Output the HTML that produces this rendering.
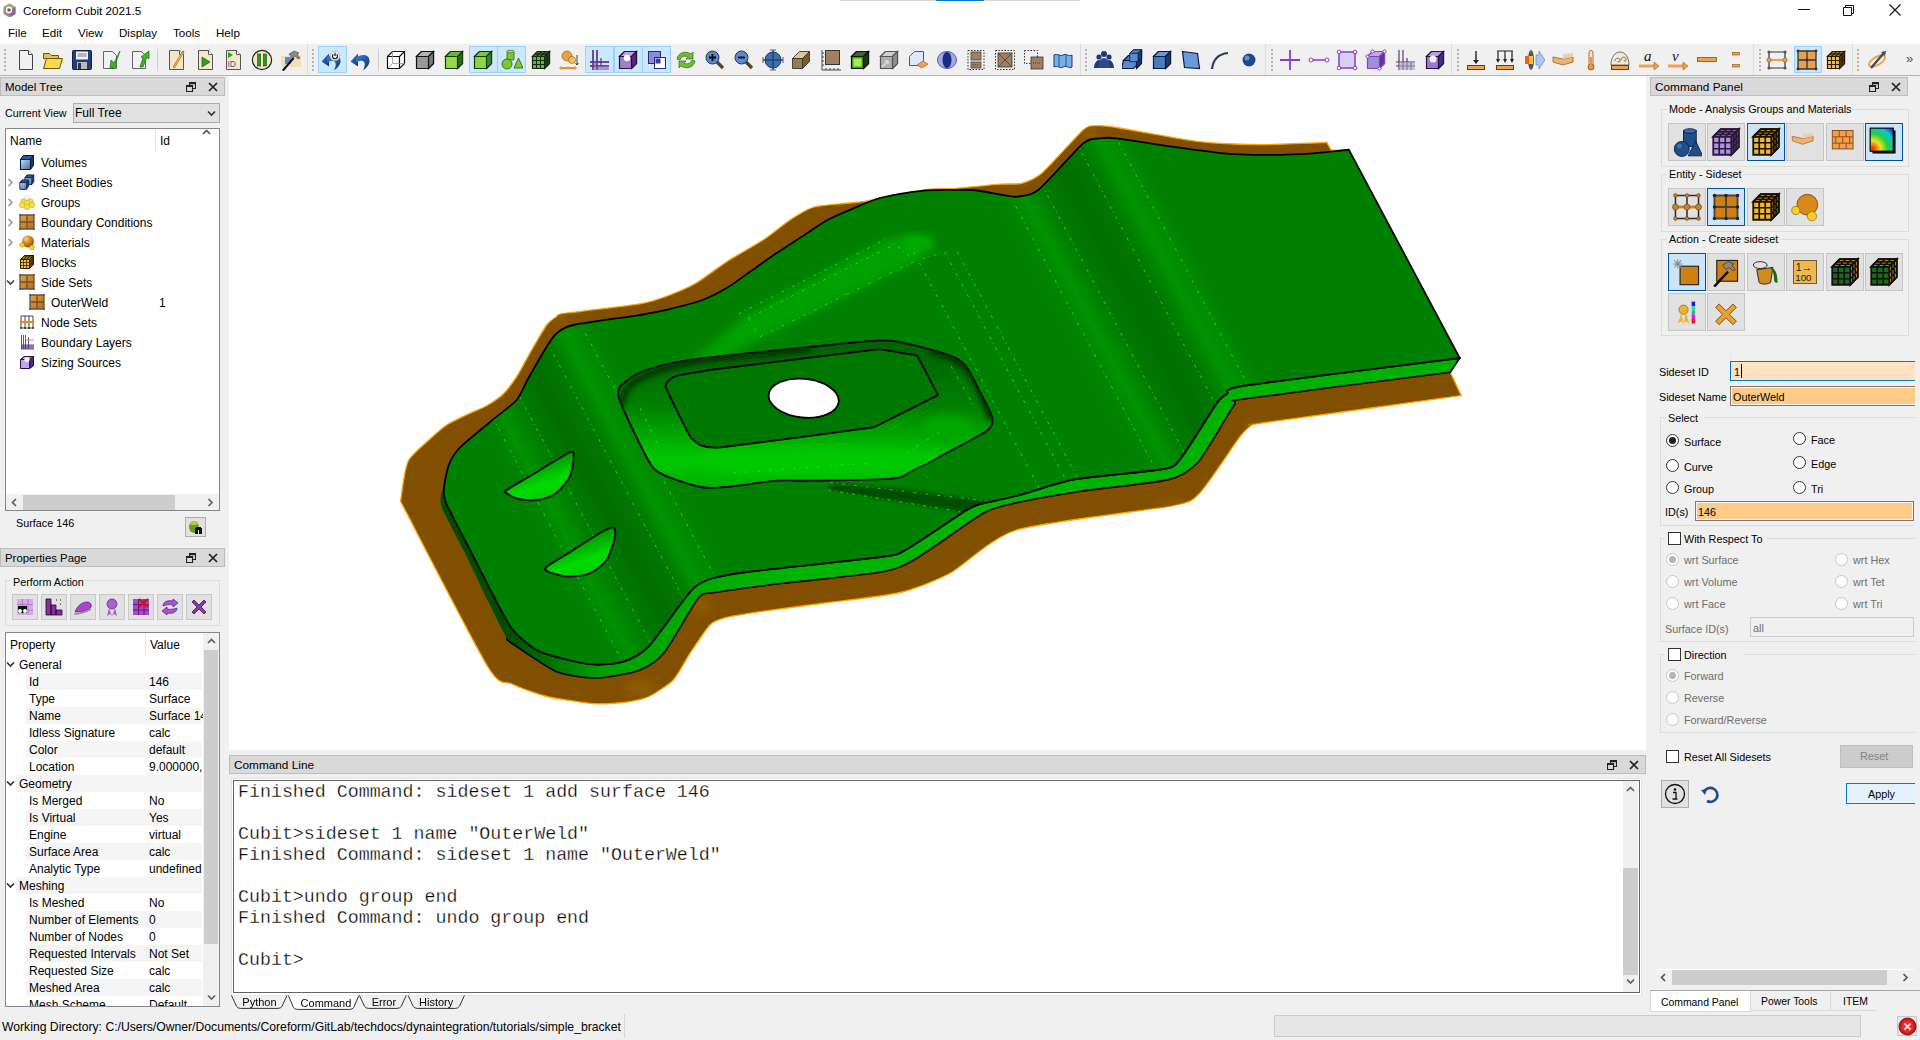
<!DOCTYPE html>
<html><head><meta charset="utf-8"><style>
*{margin:0;padding:0;box-sizing:border-box}
html,body{width:1920px;height:1040px;overflow:hidden;background:#f0f0f0;font-family:"Liberation Sans",sans-serif;font-size:12px;color:#000}
.a{position:absolute}
.t{position:absolute;white-space:nowrap;line-height:14px}
.hdr{position:absolute;background:#d9d9d9;border:1px solid #bcbcbc}
.grip{position:absolute;top:49px;width:2px;height:22px;background:repeating-linear-gradient(#b4b4b4 0 2px,transparent 2px 4px)}
.sep{position:absolute;top:49px;width:1px;height:22px;background:#cfcfcf}
.btn{position:absolute;background:#e1e1e1;border:1px solid #adadad}
.rad{position:absolute;width:13px;height:13px;border-radius:50%;border:1px solid #333;background:#fff}
.radd{position:absolute;width:13px;height:13px;border-radius:50%;border:1px solid #c4c4c4;background:#fff}
.chk{position:absolute;width:13px;height:13px;border:1px solid #333;background:#fff}
.gb{position:absolute;border:1px solid #dcdcdc}
.gl{position:absolute;background:#f0f0f0;padding:0 2px}
.dis{color:#6d6d6d}
.mono{position:absolute;white-space:pre;font-family:"Liberation Mono",monospace;font-size:18.3px;line-height:21px;color:#000;-webkit-text-stroke:0.3px #fff}

</style></head><body>
<div class="a" style="left:0px;top:0px;width:1920px;height:43px;background:#fff"></div>
<div class="a" style="left:840px;top:0px;width:240px;height:1px;background:#dadada"></div>
<div class="a" style="left:936px;top:0px;width:48px;height:1px;background:#0078d7"></div>
<svg class="a" style="left:3px;top:3px" width="13" height="14" viewBox="0 0 13 14"><path d="M6.5,0.5l6,3.5v7l-6,3.5l-6,-3.5v-7z" fill="#a08aa0"/><path d="M6.5,0.5l6,3.5l-6,3.5l-6,-3.5z" fill="#9ab070"/><path d="M12.5,4v7l-6,3.5v-7z" fill="#8a6aa0"/><circle cx="6" cy="7" r="3.2" fill="#fff"/><circle cx="6" cy="7" r="1.8" fill="#c04040"/></svg>
<div class="t" style="left:23px;top:4px;font-size:11.7px">Coreform Cubit 2021.5</div>
<div class="t" style="left:8px;top:26px;font-size:11.6px">File</div>
<div class="t" style="left:42px;top:26px;font-size:11.6px">Edit</div>
<div class="t" style="left:78px;top:26px;font-size:11.6px">View</div>
<div class="t" style="left:119px;top:26px;font-size:11.6px">Display</div>
<div class="t" style="left:173px;top:26px;font-size:11.6px">Tools</div>
<div class="t" style="left:216px;top:26px;font-size:11.6px">Help</div>
<svg class="a" style="left:1798px;top:9px" width="12" height="2" viewBox="0 0 12 2"><rect width="12" height="1" fill="#111"/></svg>
<svg class="a" style="left:1843px;top:5px" width="11" height="11" viewBox="0 0 11 11"><path d="M2.5,2.5v-2h8v8h-2M0.5,2.5h8v8h-8z" fill="none" stroke="#111"/></svg>
<svg class="a" style="left:1889px;top:4px" width="12" height="12" viewBox="0 0 12 12"><path d="M0.5,0.5l11,11M11.5,0.5l-11,11" stroke="#111" stroke-width="1.1"/></svg>
<div class="t" style="left:2px;top:1020px;font-size:12.2px">Working Directory: C:/Users/Owner/Documents/Coreform/GitLab/techdocs/dynaintegration/tutorials/simple_bracket</div>
<div class="a" style="left:624px;top:1014px;width:1px;height:24px;background:#d7d7d7"></div>
<div class="a" style="left:1274px;top:1015px;width:587px;height:22px;background:#e6e6e6;border:1px solid #cacaca"></div>
<div class="a" style="left:1897px;top:1016px;width:20px;height:20px;background:#e8e8e8;border:1px solid #c8c8c8"></div>
<svg class="a" style="left:1898px;top:1017px" width="19" height="19" viewBox="0 0 19 19"><circle cx="9.5" cy="9.5" r="8.5" fill="#d01818" stroke="#801010"/><circle cx="9.5" cy="9.5" r="6" fill="#e83030"/><path d="M6.5,6.5l6,6M12.5,6.5l-6,6" stroke="#fff" stroke-width="1.6"/></svg>
<div class="a" style="left:0;top:43px;width:1920px;height:33px;background:#f0f0f0;border-top:1px solid #fbfbfb;border-bottom:1px solid #b6b6b6"></div>
<div class="a" style="left:318px;top:46px;width:29px;height:27px;background:#cce8ff;border:1px solid #99d1ff"></div>
<div class="a" style="left:469px;top:46px;width:29px;height:27px;background:#cce8ff;border:1px solid #99d1ff"></div>
<div class="a" style="left:497px;top:46px;width:29px;height:27px;background:#cce8ff;border:1px solid #99d1ff"></div>
<div class="a" style="left:585px;top:46px;width:29px;height:27px;background:#cce8ff;border:1px solid #99d1ff"></div>
<div class="a" style="left:614px;top:46px;width:29px;height:27px;background:#cce8ff;border:1px solid #99d1ff"></div>
<div class="a" style="left:642px;top:46px;width:29px;height:27px;background:#cce8ff;border:1px solid #99d1ff"></div>
<div class="a" style="left:1794px;top:46px;width:28px;height:27px;background:#cce8ff;border:1px solid #99d1ff"></div>
<div class="grip" style="left:4px"></div>
<div class="grip" style="left:312px"></div>
<div class="grip" style="left:1085px"></div>
<div class="grip" style="left:1271px"></div>
<div class="grip" style="left:1457px"></div>
<div class="grip" style="left:1759px"></div>
<div class="grip" style="left:1857px"></div>
<div class="sep" style="left:157px"></div>
<div class="sep" style="left:378px"></div>
<div class="sep" style="left:1080px"></div>
<div class="sep" style="left:1265px"></div>
<div class="sep" style="left:1451px"></div>
<div class="sep" style="left:1753px"></div>
<div class="sep" style="left:1852px"></div>
<div class="a" style="left:307px;top:44px;width:1px;height:31px;background:#dcdcdc"></div>
<div class="a" style="left:1080px;top:44px;width:1px;height:31px;background:#dcdcdc"></div>
<div class="a" style="left:1265px;top:44px;width:1px;height:31px;background:#dcdcdc"></div>
<div class="a" style="left:1451px;top:44px;width:1px;height:31px;background:#dcdcdc"></div>
<div class="a" style="left:1753px;top:44px;width:1px;height:31px;background:#dcdcdc"></div>
<div class="a" style="left:1852px;top:44px;width:1px;height:31px;background:#dcdcdc"></div>
<svg class="a" style="left:15px;top:49px" width="22" height="22" viewBox="0 0 22 22"><path d="M4.5,1.5h9l4,4v15h-13z" fill="#eef0f2" stroke="#444"/><path d="M13.5,1.5v4h4" fill="#fff" stroke="#444"/></svg>
<svg class="a" style="left:42px;top:49px" width="22" height="22" viewBox="0 0 22 22"><path d="M1.5,4.5h6l2,2h7v3h-15z" fill="#e8c24a" stroke="#6a5200"/><path d="M1.5,19.5l3,-10h16l-3,10z" fill="#ffd84a" stroke="#6a5200"/></svg>
<svg class="a" style="left:71px;top:49px" width="22" height="22" viewBox="0 0 22 22"><rect x="1.5" y="1.5" width="19" height="19" rx="1" fill="#1d3f7a" stroke="#0b2250"/><rect x="5" y="2.5" width="12" height="8" fill="#f2f4f8"/><path d="M6.5,5h9M6.5,7h9" stroke="#556" stroke-width="0.8"/><rect x="6" y="13" width="10" height="7" fill="#bbb"/><rect x="7" y="14" width="3" height="6" fill="#333"/></svg>
<svg class="a" style="left:100px;top:49px" width="22" height="22" viewBox="0 0 22 22"><path d="M3.5,2.5h9l4,4v13h-13z" fill="#f2f2f2" stroke="#666"/><path d="M20,2l-6,12l-3,-3l-1,8l7,-1l-2,-2z" fill="#3cb820" stroke="#1a6a10" stroke-width="0.7"/></svg>
<svg class="a" style="left:129px;top:49px" width="22" height="22" viewBox="0 0 22 22"><path d="M3.5,2.5h9l4,4v13h-13z" fill="#f2f2f2" stroke="#666"/><path d="M11,18l3,-9l-2,-1l8,-6l0,8l-2,-2l-4,10z" fill="#3cb820" stroke="#1a6a10" stroke-width="0.7"/></svg>
<svg class="a" style="left:166px;top:49px" width="22" height="22" viewBox="0 0 22 22"><path d="M3.5,1.5h10l4,4v15h-14z" fill="#f8e6c8" stroke="#555"/><path d="M13.5,1.5v4h4" fill="#fff" stroke="#555"/><path d="M7,18l9,-15l1.5,1l-9,15z" fill="#f0c040" stroke="#8a6010" stroke-width="0.6"/><path d="M16,3l1,-1.5l1.5,1l-1,1.5z" fill="#e04020"/></svg>
<svg class="a" style="left:195px;top:49px" width="22" height="22" viewBox="0 0 22 22"><path d="M3.5,1.5h10l4,4v15h-14z" fill="#f8e6c8" stroke="#555"/><path d="M13.5,1.5v4h4" fill="#fff" stroke="#555"/><path d="M7,8v10l8,-5z" fill="#30a020" stroke="#146010" stroke-width="0.7"/></svg>
<svg class="a" style="left:223px;top:49px" width="22" height="22" viewBox="0 0 22 22"><path d="M3.5,1.5h10l4,4v15h-14z" fill="#f8e6c8" stroke="#555"/><path d="M13.5,1.5v4h4" fill="#fff" stroke="#555"/><path d="M5,3v6l5,-3z" fill="#30a020"/><text x="4.5" y="18" font-family="Liberation Sans" font-size="8.5" fill="#3a5a9a">ID</text></svg>
<svg class="a" style="left:251px;top:49px" width="22" height="22" viewBox="0 0 22 22"><circle cx="11" cy="11" r="9.6" fill="#f8e6c8" stroke="#222" stroke-width="1.2"/><rect x="6.5" y="5" width="3.2" height="12" fill="#2a9a18" stroke="#145010" stroke-width="0.6"/><rect x="12.3" y="5" width="3.2" height="12" fill="#2a9a18" stroke="#145010" stroke-width="0.6"/></svg>
<svg class="a" style="left:280px;top:49px" width="22" height="22" viewBox="0 0 22 22"><rect x="1" y="7" width="20" height="11" fill="#efe0b8"/><rect x="5" y="8" width="6" height="7" fill="#5a8ad0"/><path d="M2,21l11,-13l1.5,1.5l-11,13z" fill="#111"/><path d="M9,5l5,-3l5,2l-2,1l3,4l-2,1l-3,-3l-3,2z" fill="#8a8a8a" stroke="#444" stroke-width="0.6"/></svg>
<svg class="a" style="left:321px;top:49px" width="22" height="22" viewBox="0 0 22 22"><defs><linearGradient id="gundo" x1="0" y1="0" x2="1" y2="1"><stop offset="0" stop-color="#3a80d8"/><stop offset="1" stop-color="#0a3078"/></linearGradient></defs><path d="M0.5,12.5L8,4.5V17.5Z" fill="url(#gundo)"/><path d="M6,8.5C11,5 19,4.5 19.5,11.5C19.8,15 17,18.5 13,21.5C15,17.5 15.5,14 13.5,12.5C11.5,11 9,11.5 6,14Z" fill="url(#gundo)"/><circle cx="14" cy="7" r="4.8" fill="#f4f4f4" stroke="#999" stroke-width="0.6"/><path d="M12.3,5.4a2.5,2.5 0 1 0 3.4,0M14,3.8v3.2" stroke="#111" stroke-width="1.2" fill="none"/></svg>
<svg class="a" style="left:350px;top:49px" width="22" height="22" viewBox="0 0 22 22"><defs><linearGradient id="gundo" x1="0" y1="0" x2="1" y2="1"><stop offset="0" stop-color="#3a80d8"/><stop offset="1" stop-color="#0a3078"/></linearGradient></defs><path d="M0.5,12.5L8,4.5V17.5Z" fill="url(#gundo)"/><path d="M6,8.5C11,5 19,4.5 19.5,11.5C19.8,15 17,18.5 13,21.5C15,17.5 15.5,14 13.5,12.5C11.5,11 9,11.5 6,14Z" fill="url(#gundo)"/></svg>
<svg class="a" style="left:385px;top:49px" width="22" height="22" viewBox="0 0 22 22"><path d="M2.5,7.5l5,-5h12v12l-5,5h-12zM2.5,7.5h12v12M14.5,7.5l5,-5" fill="#fff" stroke="#111" stroke-width="1.2"/><path d="M7.5,2.5v12h12M7.5,14.5l-5,5" fill="none" stroke="#999" stroke-width="0.8"/></svg>
<svg class="a" style="left:414px;top:49px" width="22" height="22" viewBox="0 0 22 22"><path d="M2.5,7.5l5,-5h12v12l-5,5h-12z" fill="#9a9a9a" stroke="#111" stroke-width="1.2"/><path d="M2.5,7.5l5,-5h12l-5,5z" fill="#b4b4b4" stroke="#111" stroke-width="1.2"/><path d="M14.5,7.5l5,-5v12l-5,5z" fill="#7a7a7a" stroke="#111" stroke-width="1.2"/></svg>
<svg class="a" style="left:443px;top:49px" width="22" height="22" viewBox="0 0 22 22"><path d="M2.5,7.5l5,-5h12v12l-5,5h-12z" fill="#9ad84a" stroke="#123a10" stroke-width="1.2"/><path d="M14.5,7.5l5,-5v12l-5,5z" fill="#2a6a20" stroke="#123a10" stroke-width="1.2"/><path d="M2.5,7.5l5,-5h12l-5,5z" fill="#6aba30" stroke="#123a10" stroke-width="1.2"/></svg>
<svg class="a" style="left:472px;top:49px" width="22" height="22" viewBox="0 0 22 22"><path d="M2.5,7.5l5,-5h12v12l-5,5h-12z" fill="#8ad83a" stroke="#143a10" stroke-width="1.2"/><path d="M2.5,7.5l5,-5h12l-5,5z" fill="#7ac832" stroke="#143a10" stroke-width="1.2"/><path d="M14.5,7.5l5,-5v12l-5,5z" fill="#3a8a20" stroke="#143a10" stroke-width="1.2"/></svg>
<svg class="a" style="left:501px;top:49px" width="22" height="22" viewBox="0 0 22 22"><rect x="6" y="2" width="7" height="9" rx="1" fill="#7ac832" stroke="#245a14" stroke-width="0.8"/><ellipse cx="9.5" cy="2.5" rx="3.5" ry="1.3" fill="#aee860" stroke="#245a14" stroke-width="0.6"/><circle cx="6" cy="15" r="5" fill="#7ac832" stroke="#245a14" stroke-width="0.8"/><path d="M13,19l4.5,-10l4.5,10z" fill="#7ac832" stroke="#245a14" stroke-width="0.8"/></svg>
<svg class="a" style="left:530px;top:49px" width="22" height="22" viewBox="0 0 22 22"><path d="M2.5,7.5l5,-5h12v12l-5,5h-12z" fill="#6ab83a" stroke="#112a10" stroke-width="1.2"/><path d="M2.5,7.5l5,-5h12l-5,5z" fill="#5aa830" stroke="#112a10" stroke-width="1.2"/><path d="M14.5,7.5l5,-5v12l-5,5z" fill="#2a6a20" stroke="#112a10" stroke-width="1.2"/><path d="M2.5,11.5h12M2.5,15.5h12M6.5,7.5v12M10.5,7.5v12M6.5,7.5l5,-5M10.5,7.5l5,-5M4.2,5.8h12M5.8,4.2h12M16.2,5.8v12M17.8,4.2v12M14.5,11.5l5,-5M14.5,15.5l5,-5" stroke="#112a10" stroke-width="1.1" fill="none"/></svg>
<svg class="a" style="left:558px;top:49px" width="22" height="22" viewBox="0 0 22 22"><circle cx="9" cy="7" r="5" fill="#f0a040" stroke="#8a5010" stroke-width="0.6"/><circle cx="14" cy="11" r="3.5" fill="#f8c060" stroke="#8a5010" stroke-width="0.6"/><path d="M2,19h16" stroke="#c07020" stroke-width="1.5"/><circle cx="3" cy="19" r="1.6" fill="#f09030"/><circle cx="10" cy="19" r="1.6" fill="#f09030"/><circle cx="17" cy="19" r="1.6" fill="#f09030"/><path d="M19,6v10l-1.5,-2M19,16l1.5,-2" stroke="#333" fill="none" stroke-width="0.9"/></svg>
<svg class="a" style="left:588px;top:49px" width="22" height="22" viewBox="0 0 22 22"><path d="M5,1v20M9,1v20M2,17h19M2,13h19M13,9v12" stroke="#6a3a8a" stroke-width="1.3" fill="none"/><rect x="5" y="13" width="4" height="8" fill="#b090d0"/><rect x="9" y="17" width="12" height="4" fill="#b090d0"/><path d="M5,1v20M9,1v20M2,17h19M2,13h19" stroke="#5a2a7a" stroke-width="1.1" fill="none"/></svg>
<svg class="a" style="left:617px;top:49px" width="22" height="22" viewBox="0 0 22 22"><path d="M2.5,7.5l5,-5h12v12l-5,5h-12z" fill="#a080c8" stroke="#2a1040" stroke-width="1.2"/><path d="M2.5,7.5l5,-5h12l-5,5z" fill="#c0a0e0" stroke="#2a1040" stroke-width="1.2"/><path d="M14.5,7.5l5,-5v12l-5,5z" fill="#502a80" stroke="#2a1040" stroke-width="1.2"/><circle cx="10" cy="9" r="3.2" fill="#fff"/></svg>
<svg class="a" style="left:646px;top:49px" width="22" height="22" viewBox="0 0 22 22"><rect x="2.5" y="2.5" width="12" height="12" fill="#8a8ae0" stroke="#2a2a6a"/><rect x="8.5" y="8.5" width="11" height="11" fill="#fff" stroke="#2a2a6a"/><rect x="9.5" y="9.5" width="5" height="5" fill="#3a3a9a"/></svg>
<svg class="a" style="left:675px;top:49px" width="22" height="22" viewBox="0 0 22 22"><path d="M2,10c1,-6 8,-9 14,-5l2,-2v7h-7l2,-2c-4,-2 -7,0 -8,3z" fill="#6ac030" stroke="#245a10" stroke-width="0.6"/><path d="M20,12c-1,6 -8,9 -14,5l-2,2v-7h7l-2,2c4,2 7,0 8,-3z" fill="#6ac030" stroke="#245a10" stroke-width="0.6"/></svg>
<svg class="a" style="left:704px;top:49px" width="22" height="22" viewBox="0 0 22 22"><path d="M12,12l7,7" stroke="#5a4020" stroke-width="3.2"/><circle cx="8.5" cy="8.5" r="6.5" fill="#5a8ac8" stroke="#1a3a6a" stroke-width="1"/><path d="M5,8.5h7M8.5,5v7" stroke="#000" stroke-width="1.8"/></svg>
<svg class="a" style="left:733px;top:49px" width="22" height="22" viewBox="0 0 22 22"><path d="M12,12l7,7" stroke="#5a4020" stroke-width="3.2"/><circle cx="8.5" cy="8.5" r="6.5" fill="#5a8ac8" stroke="#1a3a6a" stroke-width="1"/><path d="M5,8.5h7" stroke="#000" stroke-width="1.8"/></svg>
<svg class="a" style="left:762px;top:49px" width="22" height="22" viewBox="0 0 22 22"><circle cx="11" cy="11" r="8" fill="#3a70b0" stroke="#1a3a6a"/><path d="M11,1v20M1,11h20" stroke="#1a2a4a" stroke-width="1"/><path d="M8,1h6M8,21h6M1,8v6M21,8v6" stroke="#333" stroke-width="0.8"/></svg>
<svg class="a" style="left:790px;top:49px" width="22" height="22" viewBox="0 0 22 22"><path d="M2.5,9.5l7,-7h10l-7,7z" fill="#e0c890" stroke="#333" stroke-width="0.9"/><path d="M2.5,9.5h10v10h-10z" fill="#9a7a50" stroke="#333" stroke-width="0.9"/><path d="M12.5,9.5l7,-7v10l-7,7z" fill="#7a5a30" stroke="#333" stroke-width="0.9"/></svg>
<svg class="a" style="left:820px;top:49px" width="22" height="22" viewBox="0 0 22 22"><rect x="5.5" y="1.5" width="14" height="14" fill="#a08060" stroke="#333"/><path d="M2,1v20h19M2,4h2M2,8h2M2,12h2M2,16h2M6,19v2M10,19v2M14,19v2M18,19v2" stroke="#333" fill="none" stroke-width="0.9"/></svg>
<svg class="a" style="left:849px;top:49px" width="22" height="22" viewBox="0 0 22 22"><path d="M2.5,7.5l5,-5h12v12l-5,5h-12z" fill="#4a9a30" stroke="#111" stroke-width="1.2"/><path d="M2.5,7.5l5,-5h12l-5,5z" fill="#3a6a30" stroke="#111" stroke-width="1.2"/><path d="M14.5,7.5l5,-5v12l-5,5z" fill="#1a3a18" stroke="#111" stroke-width="1.2"/><rect x="4.5" y="9.5" width="8" height="8" fill="#a8f040"/></svg>
<svg class="a" style="left:878px;top:49px" width="22" height="22" viewBox="0 0 22 22"><path d="M2.5,7.5l5,-5h12v12l-5,5h-12z" fill="#b0b0b0" stroke="#555" stroke-width="1.2"/><path d="M2.5,7.5l5,-5h12l-5,5z" fill="#d0d0d0" stroke="#555" stroke-width="1.2"/><path d="M14.5,7.5l5,-5v12l-5,5z" fill="#909090" stroke="#555" stroke-width="1.2"/><path d="M4,18l6,-6M10,12h-3M10,12v3" stroke="#ddd" stroke-width="1.5" fill="none"/></svg>
<svg class="a" style="left:907px;top:49px" width="22" height="22" viewBox="0 0 22 22"><path d="M2.5,7.5l5,-5h9v9l-5,5h-9z" fill="#dde8f8" stroke="#3a5a9a"/><path d="M10,16l6,-4l5,3l-6,4z" fill="#f0a050" stroke="#9a5010" stroke-width="0.6"/></svg>
<svg class="a" style="left:936px;top:49px" width="22" height="22" viewBox="0 0 22 22"><ellipse cx="11" cy="11" rx="9.5" ry="8.5" fill="#a8a8e0" stroke="#5a5aa0"/><ellipse cx="11" cy="11" rx="4.5" ry="8" fill="#1a2a8a"/></svg>
<svg class="a" style="left:965px;top:49px" width="22" height="22" viewBox="0 0 22 22"><rect x="3" y="1.5" width="16" height="19" fill="none" stroke="#333" stroke-dasharray="1.5 1.5"/><rect x="6" y="3" width="10" height="8" fill="#a08060" stroke="#333" stroke-width="0.7"/><rect x="6" y="13" width="10" height="6" fill="#a08060" stroke="#333" stroke-width="0.7"/><path d="M8,16h6" stroke="#333" stroke-dasharray="1 1"/></svg>
<svg class="a" style="left:994px;top:49px" width="22" height="22" viewBox="0 0 22 22"><rect x="1.5" y="1.5" width="19" height="19" fill="none" stroke="#333" stroke-dasharray="1.5 1.5"/><rect x="4" y="4" width="14" height="14" fill="#a08060" stroke="#333" stroke-width="0.8"/><path d="M4,4l14,14M18,4l-14,14" stroke="#333" stroke-width="0.7"/></svg>
<svg class="a" style="left:1023px;top:49px" width="22" height="22" viewBox="0 0 22 22"><rect x="1.5" y="1.5" width="13" height="13" fill="none" stroke="#333" stroke-dasharray="1.5 1.5"/><rect x="8" y="8" width="12" height="12" fill="#a08060" stroke="#333" stroke-width="0.8"/><path d="M10,14h7" stroke="#333" stroke-dasharray="1 1"/></svg>
<svg class="a" style="left:1052px;top:49px" width="22" height="22" viewBox="0 0 22 22"><path d="M2,6c3,-2 6,2 9,0c3,-2 6,2 9,0v12c-3,2 -6,-2 -9,0c-3,2 -6,-2 -9,0z" fill="#7ab0e8" stroke="#1a3a7a"/><path d="M7,5v13M14,5v13" stroke="#1a3a7a" stroke-width="0.8"/></svg>
<svg class="a" style="left:1093px;top:49px" width="22" height="22" viewBox="0 0 22 22"><circle cx="6" cy="8" r="2.6" fill="#1a3a7a"/><circle cx="16" cy="8" r="2.6" fill="#1a3a7a"/><circle cx="11" cy="5" r="3" fill="#1a3a7a"/><path d="M1,19c0,-5 3,-8 5,-8c2,0 5,3 5,8zM11,19c0,-5 3,-8 5,-8c2,0 5,3 5,8z" fill="#1a3a7a"/><path d="M5,19c0,-6 3,-10 6,-10c3,0 6,4 6,10z" fill="#2a4a8a"/></svg>
<svg class="a" style="left:1122px;top:49px" width="22" height="22" viewBox="0 0 22 22"><path d="M1.5,11.5l5,-5h10v8l-5,5h-12z" fill="#5a8ad0" stroke="#0a1a40" stroke-width="1.2"/><path d="M1.5,11.5l5,-5h12l-5,5z" fill="#4a7ac0" stroke="#0a1a40" stroke-width="1.2"/><path d="M14.5,7.5l5,-5v12l-5,5z" fill="#1a3a70" stroke="#0a1a40" stroke-width="1.2"/><g transform="translate(6,-1) scale(0.7)"><path d="M2.5,7.5l5,-5h12v12l-5,5h-12z" fill="#5a8ad0" stroke="#0a1a40" stroke-width="1.2"/><path d="M2.5,7.5l5,-5h12l-5,5z" fill="#4a7ac0" stroke="#0a1a40" stroke-width="1.2"/><path d="M14.5,7.5l5,-5v12l-5,5z" fill="#1a3a70" stroke="#0a1a40" stroke-width="1.2"/></g></svg>
<svg class="a" style="left:1151px;top:49px" width="22" height="22" viewBox="0 0 22 22"><path d="M2.5,7.5l5,-5h12v12l-5,5h-12z" fill="#4a7ac0" stroke="#0a1a40" stroke-width="1.2"/><path d="M2.5,7.5l5,-5h12l-5,5z" fill="#6a9ad8" stroke="#0a1a40" stroke-width="1.2"/><path d="M14.5,7.5l5,-5v12l-5,5z" fill="#1a3a70" stroke="#0a1a40" stroke-width="1.2"/></svg>
<svg class="a" style="left:1180px;top:49px" width="22" height="22" viewBox="0 0 22 22"><path d="M2.5,2.5l15,2l2,15l-15,-1z" fill="#6a9ad8" stroke="#0a1a40" stroke-width="1.2"/></svg>
<svg class="a" style="left:1209px;top:49px" width="22" height="22" viewBox="0 0 22 22"><path d="M3,20c1,-9 6,-15 16,-16" stroke="#2a3a5a" stroke-width="2.2" fill="none"/></svg>
<svg class="a" style="left:1238px;top:49px" width="22" height="22" viewBox="0 0 22 22"><circle cx="11" cy="11" r="6.5" fill="#1a4a8a"/><circle cx="9" cy="9" r="2.5" fill="#8ab0e0" opacity="0.7"/></svg>
<svg class="a" style="left:1279px;top:49px" width="22" height="22" viewBox="0 0 22 22"><path d="M11,1v20M1,11h20" stroke="#8a3ad0" stroke-width="1.8"/></svg>
<svg class="a" style="left:1308px;top:49px" width="22" height="22" viewBox="0 0 22 22"><path d="M3,11h16" stroke="#8a3ad0" stroke-width="1.5"/><circle cx="3" cy="11" r="2" fill="#fff" stroke="#8a3ad0"/><circle cx="19" cy="11" r="2" fill="#fff" stroke="#8a3ad0"/></svg>
<svg class="a" style="left:1336px;top:49px" width="22" height="22" viewBox="0 0 22 22"><rect x="3" y="3" width="16" height="16" fill="#d8d0f0" stroke="#8a3ad0" stroke-width="1.5"/><circle cx="3" cy="3" r="1.8" fill="#fff" stroke="#8a3ad0"/><circle cx="19" cy="3" r="1.8" fill="#fff" stroke="#8a3ad0"/><circle cx="3" cy="19" r="1.8" fill="#fff" stroke="#8a3ad0"/><circle cx="19" cy="19" r="1.8" fill="#fff" stroke="#8a3ad0"/></svg>
<svg class="a" style="left:1365px;top:49px" width="22" height="22" viewBox="0 0 22 22"><path d="M2.5,7.5l5,-5h12v12l-5,5h-12z" fill="#a090d0" stroke="#8a3ad0" stroke-width="1.2"/><path d="M2.5,7.5l5,-5h12l-5,5z" fill="#c0b0e0" stroke="#8a3ad0" stroke-width="1.2"/><path d="M14.5,7.5l5,-5v12l-5,5z" fill="#5a3a8a" stroke="#8a3ad0" stroke-width="1.2"/><circle cx="2.5" cy="7.5" r="1.6" fill="#fff" stroke="#8a3ad0"/><circle cx="19.5" cy="2.5" r="1.6" fill="#fff" stroke="#8a3ad0"/><circle cx="14.5" cy="19.5" r="1.6" fill="#fff" stroke="#8a3ad0"/><circle cx="7.5" cy="2.5" r="1.6" fill="#fff" stroke="#8a3ad0"/></svg>
<svg class="a" style="left:1394px;top:49px" width="22" height="22" viewBox="0 0 22 22"><path d="M5,1v20M9,1v20M2,17h19M2,13h19M13,9v12M17,13v8" stroke="#5a3a6a" stroke-width="1.2" fill="none"/><rect x="5" y="13" width="16" height="8" fill="#b0a0c8" opacity="0.6"/></svg>
<svg class="a" style="left:1424px;top:49px" width="22" height="22" viewBox="0 0 22 22"><path d="M2.5,7.5l5,-5h12v12l-5,5h-12z" fill="#9a7ad0" stroke="#2a1050" stroke-width="1.2"/><path d="M2.5,7.5l5,-5h12l-5,5z" fill="#b8a0e0" stroke="#2a1050" stroke-width="1.2"/><path d="M14.5,7.5l5,-5v12l-5,5z" fill="#4a2a80" stroke="#2a1050" stroke-width="1.2"/><circle cx="9" cy="10" r="3.5" fill="#f4f4f4"/></svg>
<svg class="a" style="left:1465px;top:49px" width="22" height="22" viewBox="0 0 22 22"><path d="M11,2v12" stroke="#222" stroke-width="1.4"/><path d="M8,11l3,4l3,-4z" fill="#222"/><rect x="2.5" y="16.5" width="17" height="4" fill="#f0a050" stroke="#6a3a10"/></svg>
<svg class="a" style="left:1494px;top:49px" width="22" height="22" viewBox="0 0 22 22"><path d="M3,2h16M4,2v10M11,2v10M18,2v10" stroke="#222" stroke-width="1.2" fill="none"/><path d="M2,10l2,4l2,-4zM9,10l2,4l2,-4zM16,10l2,4l2,-4z" fill="#222"/><rect x="2.5" y="16.5" width="17" height="4" fill="#f0a050" stroke="#6a3a10"/></svg>
<svg class="a" style="left:1523px;top:49px" width="22" height="22" viewBox="0 0 22 22"><path d="M13,6h3v-4l6,9l-6,9v-4h-3z" fill="#a8c8f8" stroke="#5a7ab0" stroke-width="0.6"/><ellipse cx="8" cy="11" rx="3" ry="10" fill="#555"/><rect x="2" y="7" width="8" height="8" fill="#f06010"/><rect x="6" y="7" width="4" height="8" fill="#f8c040"/></svg>
<svg class="a" style="left:1552px;top:49px" width="22" height="22" viewBox="0 0 22 22"><path d="M1,8l10,2l10,-2v5l-10,3l-10,-3z" fill="#f0b070" stroke="#8a5010" stroke-width="0.7"/><path d="M11,5l10,-1v4l-10,2z" fill="#e8d0b8"/></svg>
<svg class="a" style="left:1580px;top:49px" width="22" height="22" viewBox="0 0 22 22"><rect x="9" y="1.5" width="4" height="15" rx="2" fill="#f8e8d0" stroke="#8a5010" stroke-width="0.8"/><circle cx="11" cy="18" r="3" fill="#f09040" stroke="#8a5010" stroke-width="0.8"/><path d="M11,8v9" stroke="#f09040" stroke-width="2"/></svg>
<svg class="a" style="left:1609px;top:49px" width="22" height="22" viewBox="0 0 22 22"><path d="M2,16c0,-8 4,-13 9,-13c5,0 9,5 9,13z" fill="#f4e8d8" stroke="#554" stroke-width="0.8"/><path d="M6,12c0,-3 4,-4 5,-1c1,2 -2,3 -2,1M12,11c0,-3 4,-4 5,-1c1,2 -2,3 -2,1" stroke="#554" stroke-width="0.8" fill="none"/><rect x="2.5" y="16.5" width="17" height="4" fill="#f0a050" stroke="#6a3a10"/></svg>
<svg class="a" style="left:1638px;top:49px" width="22" height="22" viewBox="0 0 22 22"><text x="6" y="12" font-family="Liberation Serif" font-style="italic" font-size="15" fill="#111">a</text><path d="M1,17h16" stroke="#f0a050" stroke-width="3"/><path d="M16,13l5,4l-5,4z" fill="#f0a050" stroke="#8a5010" stroke-width="0.5"/></svg>
<svg class="a" style="left:1667px;top:49px" width="22" height="22" viewBox="0 0 22 22"><text x="5" y="12" font-family="Liberation Serif" font-style="italic" font-size="15" fill="#111">v</text><path d="M1,17h16" stroke="#f0a050" stroke-width="3"/><path d="M16,13l5,4l-5,4z" fill="#f0a050" stroke="#8a5010" stroke-width="0.5"/></svg>
<svg class="a" style="left:1696px;top:49px" width="22" height="22" viewBox="0 0 22 22"><rect x="1.5" y="8.5" width="19" height="4" fill="#f0a050" stroke="#8a5010" stroke-width="0.8"/></svg>
<svg class="a" style="left:1725px;top:49px" width="22" height="22" viewBox="0 0 22 22"><rect x="7.5" y="3.5" width="7" height="2.5" fill="#f0a050" stroke="#8a5010" stroke-width="0.6"/><rect x="7.5" y="15.5" width="7" height="2.5" fill="#f0a050" stroke="#8a5010" stroke-width="0.6"/></svg>
<svg class="a" style="left:1766px;top:49px" width="22" height="22" viewBox="0 0 22 22"><path d="M3,3h16v16h-16zM3,11h16" stroke="#333" stroke-width="1.2" fill="none"/><path d="M3,11h16" stroke="#f0a050" stroke-width="2"/><circle cx="3" cy="3" r="1.6" fill="#555"/><circle cx="19" cy="3" r="1.6" fill="#555"/><circle cx="3" cy="19" r="1.6" fill="#555"/><circle cx="19" cy="19" r="1.6" fill="#555"/><circle cx="3" cy="11" r="2.2" fill="#f0a050" stroke="#8a5010" stroke-width="0.6"/><circle cx="19" cy="11" r="2.2" fill="#f0a050" stroke="#8a5010" stroke-width="0.6"/></svg>
<svg class="a" style="left:1796px;top:49px" width="22" height="22" viewBox="0 0 22 22"><rect x="2" y="2" width="18" height="18" fill="#e8a050"/><path d="M2,2h18v18h-18zM11,2v18M2,11h18" stroke="#333" stroke-width="1.3" fill="none"/><circle cx="2" cy="2" r="1.4" fill="#333"/><circle cx="20" cy="2" r="1.4" fill="#333"/><circle cx="2" cy="20" r="1.4" fill="#333"/><circle cx="20" cy="20" r="1.4" fill="#333"/><circle cx="11" cy="11" r="1.4" fill="#333"/></svg>
<svg class="a" style="left:1825px;top:49px" width="22" height="22" viewBox="0 0 22 22"><path d="M2.5,7.5l5,-5h12v12l-5,5h-12z" fill="#f0c040" stroke="#2a1a00" stroke-width="1.2"/><path d="M2.5,7.5l5,-5h12l-5,5z" fill="#e8b030" stroke="#2a1a00" stroke-width="1.2"/><path d="M14.5,7.5l5,-5v12l-5,5z" fill="#8a6010" stroke="#2a1a00" stroke-width="1.2"/><path d="M2.5,11.5h12M2.5,15.5h12M6.5,7.5v12M10.5,7.5v12M6.5,7.5l5,-5M10.5,7.5l5,-5M4.2,5.8h12M5.8,4.2h12M16.2,5.8v12M17.8,4.2v12M14.5,11.5l5,-5M14.5,15.5l5,-5" stroke="#2a1a00" stroke-width="1.1" fill="none"/></svg>
<svg class="a" style="left:1866px;top:49px" width="22" height="22" viewBox="0 0 22 22"><ellipse cx="11" cy="12" rx="9" ry="4" fill="none" stroke="#f0a050" stroke-width="2" transform="rotate(-30 11 12)"/><path d="M5,19l12,-14" stroke="#444" stroke-width="2.2"/><path d="M15,3l5,-1l-1,5z" fill="#444"/></svg>
<div class="t" style="left:1906px;top:52px;font-size:13px;color:#555">&#187;</div>
<div class="a" style="left:229px;top:76px;width:1417px;height:674px;background:#fff"></div>
<svg class="a" style="left:0;top:0" width="1920" height="1040" viewBox="0 0 1920 1040">
<defs>
<clipPath id="ctop"><path d="M448.8,465.0 C450.6,460.0 454.9,452.8 460.0,447.5 C465.1,442.2 485.9,425.5 492.5,420.0 C499.1,414.5 512.5,404.9 516.7,400.0 C520.9,395.1 524.8,384.5 528.3,378.3 C531.8,372.1 543.4,351.9 546.7,346.7 C550.0,341.4 553.6,335.8 556.7,333.3 C559.8,330.8 563.6,327.1 573.3,325.0 C583.0,322.9 628.9,316.8 640.0,315.0 C651.1,313.2 661.5,311.1 668.8,309.4 C676.0,307.6 695.6,302.6 702.5,300.0 C709.4,297.4 721.7,291.0 727.5,287.5 C733.3,284.0 746.7,274.1 752.5,270.0 C758.3,265.9 771.7,256.4 777.5,252.5 C783.3,248.6 796.7,240.0 802.5,236.2 C808.3,232.5 821.7,223.2 827.5,220.0 C833.3,216.8 846.4,211.3 852.5,208.8 C858.6,206.2 871.9,200.1 880.0,198.0 C888.1,195.9 911.0,191.7 921.7,190.8 C932.4,189.9 962.6,189.6 971.7,190.0 C980.8,190.4 994.8,193.7 1000.0,194.5 C1005.2,195.3 1012.2,197.2 1016.7,196.7 C1021.2,196.2 1030.5,196.2 1038.3,190.0 C1046.1,183.8 1076.1,149.3 1083.3,143.3 C1090.5,137.3 1096.1,138.9 1100.0,138.3 C1103.9,137.7 1108.9,137.4 1116.7,138.3 C1124.5,139.2 1153.1,143.9 1166.7,145.8 C1180.3,147.7 1217.5,153.2 1233.3,154.2 C1249.1,155.2 1288.5,154.6 1302.0,154.1 C1315.5,153.6 1348.8,149.7 1348.8,149.7 C1348.8,149.7 1459.7,358.1 1459.7,358.1 C1459.7,358.1 1272.8,381.3 1245.6,385.5 C1218.4,389.7 1230.2,392.0 1226.9,394.0 C1223.6,396.0 1222.4,395.5 1217.0,403.0 C1211.6,410.5 1186.9,451.0 1180.6,458.7 C1174.3,466.4 1175.2,466.7 1162.7,469.1 C1150.2,471.5 1089.9,476.6 1073.3,479.6 C1056.7,482.6 1030.5,492.2 1020.0,495.0 C1009.5,497.8 989.5,501.6 983.3,503.3 C977.1,505.1 975.5,504.8 966.7,510.0 C958.0,515.2 918.0,542.9 908.3,548.3 C898.6,553.7 901.8,554.0 883.3,556.7 C864.8,559.4 770.0,569.2 750.0,571.7 C730.0,574.2 718.4,576.7 712.0,578.5 C705.6,580.3 698.4,584.4 695.0,587.0 C691.6,589.6 688.4,594.0 683.0,601.0 C677.6,608.0 655.3,639.6 648.3,646.7 C641.3,653.8 630.1,659.7 623.3,661.7 C616.5,663.7 599.7,665.4 590.0,664.2 C580.3,663.0 549.0,655.7 540.0,651.7 C531.0,647.7 518.5,636.6 513.0,630.0 C507.5,623.4 498.0,604.3 493.0,595.0 C488.0,585.7 475.4,560.5 470.0,550.0 C464.6,539.5 450.1,512.0 447.0,505.0 C443.9,498.0 443.5,494.7 443.8,490.0 C444.0,485.3 446.9,470.0 448.8,465.0 Z"/></clipPath>
<linearGradient id="gband" x1="0" y1="0" x2="1" y2="0"><stop offset="0" stop-color="#004a00"/><stop offset="0.1" stop-color="#00a000"/><stop offset="0.3" stop-color="#00b400"/><stop offset="1" stop-color="#00b000"/></linearGradient>
<linearGradient id="grim" x1="0" y1="0" x2="0" y2="1"><stop offset="0" stop-color="#006000"/><stop offset="0.45" stop-color="#008000"/><stop offset="0.8" stop-color="#00c800"/><stop offset="1" stop-color="#00b000"/></linearGradient>
<linearGradient id="gtab" x1="0.2" y1="0.1" x2="0.6" y2="0.9"><stop offset="0" stop-color="#005800"/><stop offset="0.35" stop-color="#00a000"/><stop offset="0.75" stop-color="#00dc00"/><stop offset="1" stop-color="#00d000"/></linearGradient>
<linearGradient id="gbL" gradientUnits="userSpaceOnUse" gradientTransform="matrix(1,0,0.532,1,0,0)" x1="255" y1="0" x2="425" y2="0"><stop offset="0" stop-color="#008000"/><stop offset="0.09" stop-color="#008400"/><stop offset="0.15" stop-color="#009200"/><stop offset="0.32" stop-color="#007a00"/><stop offset="0.47" stop-color="#006e00"/><stop offset="0.65" stop-color="#007800"/><stop offset="0.77" stop-color="#009400"/><stop offset="0.9" stop-color="#008600"/><stop offset="1" stop-color="#008000"/></linearGradient>
<linearGradient id="gbR" gradientUnits="userSpaceOnUse" gradientTransform="matrix(1,0,0.532,1,0,0)" x1="885" y1="0" x2="1060" y2="0"><stop offset="0" stop-color="#008000"/><stop offset="0.12" stop-color="#008600"/><stop offset="0.2" stop-color="#009400"/><stop offset="0.34" stop-color="#007a00"/><stop offset="0.5" stop-color="#006f00"/><stop offset="0.66" stop-color="#007600"/><stop offset="0.8" stop-color="#009400"/><stop offset="0.9" stop-color="#008a00"/><stop offset="1" stop-color="#008000"/></linearGradient>
<filter id="blur3" x="-20%" y="-20%" width="140%" height="140%"><feGaussianBlur stdDeviation="4"/></filter>
<filter id="blur1" x="-20%" y="-20%" width="140%" height="140%"><feGaussianBlur stdDeviation="1.5"/></filter>
<filter id="blur2" x="-20%" y="-20%" width="140%" height="140%"><feGaussianBlur stdDeviation="2.5"/></filter>
</defs>
<path d="M400.6,501.2 C400.6,501.2 475.0,645.7 488.0,667.0 C501.0,688.3 505.4,680.6 512.0,684.0 C518.6,687.4 535.9,693.7 545.0,696.0 C554.1,698.3 580.9,702.5 590.0,703.3 C599.1,704.1 616.5,703.3 623.3,702.5 C630.1,701.7 642.5,699.3 648.3,696.7 C654.1,694.1 668.4,685.1 673.3,680.0 C678.2,674.9 685.7,659.7 690.0,653.3 C694.3,646.9 706.1,629.1 710.0,625.0 C713.9,620.9 717.5,619.9 723.3,618.3 C729.1,616.7 748.1,613.5 760.0,611.7 C771.9,609.9 808.7,605.2 825.0,603.0 C841.3,600.8 885.4,596.0 900.0,592.5 C914.6,589.0 936.4,580.6 950.0,573.3 C963.6,566.0 991.2,537.8 1016.7,530.0 C1042.2,522.2 1147.5,510.5 1168.7,506.4 C1189.9,502.3 1190.2,502.6 1198.5,494.5 C1206.8,486.4 1233.8,444.8 1240.0,436.7 C1246.2,428.6 1249.1,426.6 1251.7,425.0 C1254.3,423.4 1237.5,426.4 1262.0,423.0 C1286.5,419.6 1461.3,395.6 1461.3,395.6 C1461.3,395.6 1450.3,372.2 1450.3,372.2 C1450.3,372.2 1459.7,358.1 1459.7,358.1 C1459.7,358.1 1348.8,149.7 1348.8,149.7 C1348.8,149.7 1331.3,150.4 1331.3,150.4 C1331.3,150.4 1326.9,142.4 1326.9,142.4 C1326.9,142.4 1273.1,144.7 1258.3,144.6 C1243.5,144.5 1216.5,143.7 1200.0,141.7 C1183.5,139.7 1128.8,129.4 1116.7,127.5 C1104.6,125.6 1100.6,125.5 1096.7,125.8 C1092.8,126.1 1089.7,124.5 1083.3,130.0 C1076.9,135.5 1048.9,167.1 1041.7,173.3 C1034.5,179.5 1026.6,182.0 1021.7,183.3 C1016.8,184.6 1007.8,183.6 1000.0,184.2 C992.2,184.8 963.2,187.7 955.0,188.3 C946.8,188.9 936.8,188.4 930.0,189.2 C923.2,190.0 904.5,193.5 896.7,195.0 C888.9,196.5 869.9,200.7 863.3,201.7 C856.7,202.7 845.9,203.1 840.0,203.8 C834.1,204.4 818.3,205.6 812.5,207.5 C806.7,209.4 795.5,216.4 790.0,220.0 C784.5,223.6 772.3,233.9 765.0,238.8 C757.7,243.6 735.7,256.0 727.5,261.2 C719.3,266.5 702.3,279.6 695.0,283.8 C687.7,287.9 671.4,294.6 665.0,296.9 C658.6,299.2 651.7,301.8 640.0,303.8 C628.3,305.7 574.7,311.8 565.0,313.3 C555.3,314.8 558.8,315.3 556.7,316.7 C554.6,318.1 549.6,321.1 546.7,325.0 C543.8,328.9 535.2,344.0 531.7,350.0 C528.2,356.0 520.0,371.6 516.7,376.7 C513.4,381.8 506.8,390.6 503.3,394.0 C499.8,397.4 490.6,403.5 486.7,405.8 C482.8,408.1 474.7,411.1 470.0,413.3 C465.3,415.5 451.7,421.7 446.7,425.0 C441.7,428.3 431.9,437.2 427.5,441.2 C423.1,445.3 411.6,455.0 408.8,460.0 C405.9,465.0 403.0,484.0 403.0,484.0 C403.0,484.0 400.6,501.2 400.6,501.2 Z" fill="#805000" stroke="#ffa500" stroke-width="1.3"/>
<clipPath id="cout"><path d="M400.6,501.2 C400.6,501.2 475.0,645.7 488.0,667.0 C501.0,688.3 505.4,680.6 512.0,684.0 C518.6,687.4 535.9,693.7 545.0,696.0 C554.1,698.3 580.9,702.5 590.0,703.3 C599.1,704.1 616.5,703.3 623.3,702.5 C630.1,701.7 642.5,699.3 648.3,696.7 C654.1,694.1 668.4,685.1 673.3,680.0 C678.2,674.9 685.7,659.7 690.0,653.3 C694.3,646.9 706.1,629.1 710.0,625.0 C713.9,620.9 717.5,619.9 723.3,618.3 C729.1,616.7 748.1,613.5 760.0,611.7 C771.9,609.9 808.7,605.2 825.0,603.0 C841.3,600.8 885.4,596.0 900.0,592.5 C914.6,589.0 936.4,580.6 950.0,573.3 C963.6,566.0 991.2,537.8 1016.7,530.0 C1042.2,522.2 1147.5,510.5 1168.7,506.4 C1189.9,502.3 1190.2,502.6 1198.5,494.5 C1206.8,486.4 1233.8,444.8 1240.0,436.7 C1246.2,428.6 1249.1,426.6 1251.7,425.0 C1254.3,423.4 1237.5,426.4 1262.0,423.0 C1286.5,419.6 1461.3,395.6 1461.3,395.6 C1461.3,395.6 1450.3,372.2 1450.3,372.2 C1450.3,372.2 1459.7,358.1 1459.7,358.1 C1459.7,358.1 1348.8,149.7 1348.8,149.7 C1348.8,149.7 1331.3,150.4 1331.3,150.4 C1331.3,150.4 1326.9,142.4 1326.9,142.4 C1326.9,142.4 1273.1,144.7 1258.3,144.6 C1243.5,144.5 1216.5,143.7 1200.0,141.7 C1183.5,139.7 1128.8,129.4 1116.7,127.5 C1104.6,125.6 1100.6,125.5 1096.7,125.8 C1092.8,126.1 1089.7,124.5 1083.3,130.0 C1076.9,135.5 1048.9,167.1 1041.7,173.3 C1034.5,179.5 1026.6,182.0 1021.7,183.3 C1016.8,184.6 1007.8,183.6 1000.0,184.2 C992.2,184.8 963.2,187.7 955.0,188.3 C946.8,188.9 936.8,188.4 930.0,189.2 C923.2,190.0 904.5,193.5 896.7,195.0 C888.9,196.5 869.9,200.7 863.3,201.7 C856.7,202.7 845.9,203.1 840.0,203.8 C834.1,204.4 818.3,205.6 812.5,207.5 C806.7,209.4 795.5,216.4 790.0,220.0 C784.5,223.6 772.3,233.9 765.0,238.8 C757.7,243.6 735.7,256.0 727.5,261.2 C719.3,266.5 702.3,279.6 695.0,283.8 C687.7,287.9 671.4,294.6 665.0,296.9 C658.6,299.2 651.7,301.8 640.0,303.8 C628.3,305.7 574.7,311.8 565.0,313.3 C555.3,314.8 558.8,315.3 556.7,316.7 C554.6,318.1 549.6,321.1 546.7,325.0 C543.8,328.9 535.2,344.0 531.7,350.0 C528.2,356.0 520.0,371.6 516.7,376.7 C513.4,381.8 506.8,390.6 503.3,394.0 C499.8,397.4 490.6,403.5 486.7,405.8 C482.8,408.1 474.7,411.1 470.0,413.3 C465.3,415.5 451.7,421.7 446.7,425.0 C441.7,428.3 431.9,437.2 427.5,441.2 C423.1,445.3 411.6,455.0 408.8,460.0 C405.9,465.0 403.0,484.0 403.0,484.0 C403.0,484.0 400.6,501.2 400.6,501.2 Z"/></clipPath>
<g clip-path="url(#cout)"><g filter="url(#blur3)" fill="#8e5a06"><ellipse cx="640" cy="688" rx="16" ry="9"/><ellipse cx="702" cy="606" rx="9" ry="9"/><ellipse cx="1170" cy="505" rx="14" ry="6"/><ellipse cx="1252" cy="428" rx="8" ry="7"/><ellipse cx="1090" cy="133" rx="10" ry="6"/><ellipse cx="560" cy="318" rx="8" ry="6"/></g></g>
<path d="M513.0,630.0 C516.9,631.6 531.0,647.7 540.0,651.7 C549.0,655.7 580.3,663.0 590.0,664.2 C599.7,665.4 616.5,663.7 623.3,661.7 C630.1,659.7 640.9,654.7 648.3,646.7 C655.7,638.7 680.7,600.9 686.7,593.3 C692.7,585.7 692.6,584.2 700.0,581.7 C707.4,579.2 728.6,574.6 750.0,571.7 C771.4,568.8 864.8,559.4 883.3,556.7 C901.8,554.0 898.6,553.7 908.3,548.3 C918.0,542.9 958.0,515.2 966.7,510.0 C975.5,504.8 977.1,505.1 983.3,503.3 C989.5,501.6 1009.5,497.8 1020.0,495.0 C1030.5,492.2 1056.7,482.6 1073.3,479.6 C1089.9,476.6 1150.2,471.5 1162.7,469.1 C1175.2,466.7 1174.3,466.4 1180.6,458.7 C1186.9,451.0 1211.6,410.5 1217.0,403.0 C1222.4,395.5 1223.6,396.0 1226.9,394.0 C1230.2,392.0 1218.4,389.7 1245.6,385.5 C1272.8,381.3 1459.7,358.1 1459.7,358.1 C1459.7,358.1 1450.3,372.2 1450.3,372.2 C1450.3,372.2 1270.8,394.9 1245.6,398.8 C1220.4,402.6 1239.8,397.7 1234.3,405.0 C1228.8,412.3 1206.2,453.0 1198.5,461.7 C1190.8,470.4 1182.6,476.1 1168.7,479.6 C1154.8,483.1 1097.4,488.7 1079.3,491.5 C1061.2,494.3 1024.9,500.9 1013.7,503.4 C1002.5,505.9 994.6,506.9 983.3,513.3 C972.0,519.7 928.4,551.5 916.7,558.3 C905.0,565.1 898.9,568.8 883.3,571.7 C867.7,574.6 802.9,580.9 783.3,583.3 C763.7,585.7 724.9,590.8 715.0,592.5 C705.1,594.2 704.1,591.4 698.3,598.3 C692.5,605.2 671.8,643.3 665.0,651.7 C658.2,660.1 647.8,666.9 640.0,670.0 C632.2,673.1 607.7,677.8 598.0,678.0 C588.3,678.2 566.8,675.7 556.7,671.7 C546.6,667.7 517.5,647.2 511.7,643.3 C505.9,639.4 506.8,639.6 507.0,638.0 C507.2,636.4 509.1,628.4 513.0,630.0 Z" fill="url(#gband)" stroke="#000" stroke-width="1.6"/>
<path d="M443.8,490.0 C444.4,491.1 444.4,499.0 447.0,505.0 C449.6,511.0 465.4,541.0 470.0,550.0 C474.6,559.0 488.7,587.0 493.0,595.0 C497.3,603.0 511.6,625.7 513.0,630.0 C514.4,634.3 509.5,640.9 507.0,638.0 C504.5,635.1 492.2,609.5 488.0,601.0 C483.8,592.5 469.6,562.3 465.0,553.0 C460.4,543.7 444.4,513.9 442.0,508.0 C439.6,502.1 440.8,495.8 441.0,494.0 C441.2,492.2 443.1,488.9 443.8,490.0 Z" fill="#004d00"/>
<path d="M448.8,465.0 C450.6,460.0 454.9,452.8 460.0,447.5 C465.1,442.2 485.9,425.5 492.5,420.0 C499.1,414.5 512.5,404.9 516.7,400.0 C520.9,395.1 524.8,384.5 528.3,378.3 C531.8,372.1 543.4,351.9 546.7,346.7 C550.0,341.4 553.6,335.8 556.7,333.3 C559.8,330.8 563.6,327.1 573.3,325.0 C583.0,322.9 628.9,316.8 640.0,315.0 C651.1,313.2 661.5,311.1 668.8,309.4 C676.0,307.6 695.6,302.6 702.5,300.0 C709.4,297.4 721.7,291.0 727.5,287.5 C733.3,284.0 746.7,274.1 752.5,270.0 C758.3,265.9 771.7,256.4 777.5,252.5 C783.3,248.6 796.7,240.0 802.5,236.2 C808.3,232.5 821.7,223.2 827.5,220.0 C833.3,216.8 846.4,211.3 852.5,208.8 C858.6,206.2 871.9,200.1 880.0,198.0 C888.1,195.9 911.0,191.7 921.7,190.8 C932.4,189.9 962.6,189.6 971.7,190.0 C980.8,190.4 994.8,193.7 1000.0,194.5 C1005.2,195.3 1012.2,197.2 1016.7,196.7 C1021.2,196.2 1030.5,196.2 1038.3,190.0 C1046.1,183.8 1076.1,149.3 1083.3,143.3 C1090.5,137.3 1096.1,138.9 1100.0,138.3 C1103.9,137.7 1108.9,137.4 1116.7,138.3 C1124.5,139.2 1153.1,143.9 1166.7,145.8 C1180.3,147.7 1217.5,153.2 1233.3,154.2 C1249.1,155.2 1288.5,154.6 1302.0,154.1 C1315.5,153.6 1348.8,149.7 1348.8,149.7 C1348.8,149.7 1459.7,358.1 1459.7,358.1 C1459.7,358.1 1272.8,381.3 1245.6,385.5 C1218.4,389.7 1230.2,392.0 1226.9,394.0 C1223.6,396.0 1222.4,395.5 1217.0,403.0 C1211.6,410.5 1186.9,451.0 1180.6,458.7 C1174.3,466.4 1175.2,466.7 1162.7,469.1 C1150.2,471.5 1089.9,476.6 1073.3,479.6 C1056.7,482.6 1030.5,492.2 1020.0,495.0 C1009.5,497.8 989.5,501.6 983.3,503.3 C977.1,505.1 975.5,504.8 966.7,510.0 C958.0,515.2 918.0,542.9 908.3,548.3 C898.6,553.7 901.8,554.0 883.3,556.7 C864.8,559.4 770.0,569.2 750.0,571.7 C730.0,574.2 718.4,576.7 712.0,578.5 C705.6,580.3 698.4,584.4 695.0,587.0 C691.6,589.6 688.4,594.0 683.0,601.0 C677.6,608.0 655.3,639.6 648.3,646.7 C641.3,653.8 630.1,659.7 623.3,661.7 C616.5,663.7 599.7,665.4 590.0,664.2 C580.3,663.0 549.0,655.7 540.0,651.7 C531.0,647.7 518.5,636.6 513.0,630.0 C507.5,623.4 498.0,604.3 493.0,595.0 C488.0,585.7 475.4,560.5 470.0,550.0 C464.6,539.5 450.1,512.0 447.0,505.0 C443.9,498.0 443.5,494.7 443.8,490.0 C444.0,485.3 446.9,470.0 448.8,465.0 Z" fill="#008000"/>
<g clip-path="url(#ctop)">
<polygon points="308.2,100 478.2,100 808.0,720 638.0,720" fill="url(#gbL)"/>
<polygon points="938.2,100 1113.2,100 1443.0,720 1268.0,720" fill="url(#gbR)"/>
<polygon points="690,362 745,316 885,240 912,234 930,243 915,262 762,337 705,372" fill="#00a000" filter="url(#blur3)"/>
<ellipse cx="918" cy="244" rx="16" ry="9" fill="#00ac00" filter="url(#blur3)"/>
<polygon points="830,483 900,488 992,501.5 962,512 880,499 828,490" fill="#005000" filter="url(#blur1)"/>
<g stroke="#00ff00" stroke-width="1" stroke-dasharray="3 4 1 4" fill="none" opacity="0.85">
<line x1="323.8" y1="100" x2="653.6" y2="720"/>
<line x1="361.7" y1="100" x2="691.5" y2="720"/>
<line x1="418.4" y1="100" x2="748.2" y2="720"/>
<line x1="461.2" y1="100" x2="791.0" y2="720"/>
<line x1="959.2" y1="100" x2="1289.0" y2="720"/>
<line x1="996.7" y1="100" x2="1326.5" y2="720"/>
<line x1="1053.7" y1="100" x2="1383.5" y2="720"/>
<line x1="1096.2" y1="100" x2="1426.0" y2="720"/>
<line x1="913.6" y1="252" x2="1162.5" y2="720"/>
<line x1="944.7" y1="252" x2="1193.6" y2="720"/>
<line x1="957.4" y1="252" x2="1206.3" y2="720"/>
<polyline points="738.7,314 885.4,239.5"/><polyline points="748.3,318.3 895,244.2 913.3,260"/><polyline points="760,336.7 913,262 945,251.7"/><polyline points="748.3,318.3 760,337"/>
<polyline points="830,482.5 991.7,501.7"/><polyline points="828.3,490 960,511.7"/>
</g>
</g>
<path d="M618.8,397.2 C616.0,386.6 622.6,384.4 627.1,380.5 C631.6,376.6 642.2,371.0 652.2,368.0 C662.2,365.0 681.4,361.0 702.3,358.2 C723.2,355.4 786.2,349.4 808.7,347.1 C831.2,344.8 860.2,341.7 871.3,340.9 C882.4,340.1 885.0,339.9 892.2,340.9 C899.4,341.9 917.2,346.0 925.5,348.2 C933.8,350.4 949.1,355.0 954.7,357.6 C960.3,360.2 963.8,363.4 967.2,368.0 C970.6,372.6 976.7,385.3 980.0,392.0 C983.3,398.7 991.2,412.9 992.3,418.0 C993.4,423.1 991.6,426.7 988.0,430.0 C984.4,433.3 975.1,437.7 965.1,443.1 C955.1,448.5 922.7,465.5 913.0,470.2 C903.3,474.9 906.0,477.2 892.1,478.6 C878.2,480.0 824.0,480.4 808.7,480.7 C793.4,481.0 788.5,479.9 777.4,480.7 C766.3,481.5 735.5,486.2 725.2,487.0 C714.9,487.8 708.5,488.7 700.2,487.0 C691.9,485.3 669.6,478.0 662.6,474.4 C655.6,470.8 653.8,470.1 648.0,459.8 C642.2,449.5 621.6,407.8 618.8,397.2 Z" fill="url(#grim)" stroke="#000" stroke-width="1.8"/>
<clipPath id="cpad"><path d="M618.8,397.2 C616.0,386.6 622.6,384.4 627.1,380.5 C631.6,376.6 642.2,371.0 652.2,368.0 C662.2,365.0 681.4,361.0 702.3,358.2 C723.2,355.4 786.2,349.4 808.7,347.1 C831.2,344.8 860.2,341.7 871.3,340.9 C882.4,340.1 885.0,339.9 892.2,340.9 C899.4,341.9 917.2,346.0 925.5,348.2 C933.8,350.4 949.1,355.0 954.7,357.6 C960.3,360.2 963.8,363.4 967.2,368.0 C970.6,372.6 976.7,385.3 980.0,392.0 C983.3,398.7 991.2,412.9 992.3,418.0 C993.4,423.1 991.6,426.7 988.0,430.0 C984.4,433.3 975.1,437.7 965.1,443.1 C955.1,448.5 922.7,465.5 913.0,470.2 C903.3,474.9 906.0,477.2 892.1,478.6 C878.2,480.0 824.0,480.4 808.7,480.7 C793.4,481.0 788.5,479.9 777.4,480.7 C766.3,481.5 735.5,486.2 725.2,487.0 C714.9,487.8 708.5,488.7 700.2,487.0 C691.9,485.3 669.6,478.0 662.6,474.4 C655.6,470.8 653.8,470.1 648.0,459.8 C642.2,449.5 621.6,407.8 618.8,397.2 Z"/></clipPath>
<g clip-path="url(#cpad)" filter="url(#blur2)"><path d="M622,405 C622,385 640,372 700,360 L810,349" stroke="#002a00" stroke-width="7" fill="none" opacity="0.8"/><path d="M930,350 C960,358 970,368 978,385 L992,420" stroke="#002a00" stroke-width="8" fill="none" opacity="0.8"/></g>
<g clip-path="url(#cpad)"><ellipse cx="948" cy="430" rx="26" ry="14" fill="#00a800" filter="url(#blur3)"/><ellipse cx="820" cy="462" rx="125" ry="14" fill="#00c800" filter="url(#blur3)"/></g>
<g clip-path="url(#cpad)" stroke="#00ff00" stroke-width="1" stroke-dasharray="3 4 1 4" fill="none" opacity="0.8"><polyline points="733,473 800,468 871,463"/><polyline points="906,453 940,432"/><polyline points="951,366 975,408"/><polyline points="640,408 660,449"/></g>
<path d="M665.7,386.8 C664.7,382.8 671.7,377.5 675.1,376.3 C678.5,375.1 703.2,370.8 716.8,369.0 C730.4,367.2 879.6,349.2 879.6,349.2 C879.6,349.2 917.2,355.5 917.2,355.5 C917.2,355.5 938.0,395.1 938.0,395.1 C938.0,395.1 873.3,427.5 873.3,427.5 C873.3,427.5 732.5,446.1 721.0,447.3 C709.5,448.5 702.3,446.0 700.2,445.2 C698.1,444.4 692.0,439.7 689.7,435.8 C687.4,431.9 666.7,390.8 665.7,386.8 Z" fill="#007800" stroke="#000" stroke-width="1.8"/>
<ellipse cx="803.7" cy="398.2" rx="35.2" ry="19.4" fill="#fff" stroke="#000" stroke-width="1.8" transform="rotate(6 803.7 398.2)"/>
<path d="M573.0,452.0 C574.6,453.6 572.8,466.0 572.0,470.0 C571.2,474.0 569.2,478.4 566.7,481.7 C564.2,485.0 557.3,492.6 553.3,495.0 C549.3,497.4 541.4,499.5 536.7,500.0 C532.0,500.5 522.3,499.9 518.3,499.0 C514.3,498.1 508.2,494.5 506.7,493.3 C505.2,492.1 503.4,492.4 506.7,490.0 C510.0,487.6 524.6,479.3 531.7,475.0 C538.8,470.7 554.5,461.1 560.0,458.0 C565.5,454.9 571.4,450.4 573.0,452.0 Z" fill="url(#gtab)" stroke="#000" stroke-width="1.8"/>
<path d="M613.3,527.5 C615.3,528.0 615.9,532.4 615.0,536.7 C614.1,541.0 610.0,555.1 606.7,560.0 C603.4,564.9 595.1,571.1 590.0,573.3 C584.9,575.5 573.9,576.9 568.3,576.7 C562.7,576.5 551.2,573.0 548.3,571.7 C545.4,570.4 543.4,569.6 546.7,566.7 C550.0,563.8 566.2,554.5 573.3,550.0 C580.4,545.5 594.7,536.0 600.0,533.0 C605.3,530.0 611.3,527.0 613.3,527.5 Z" fill="url(#gtab)" stroke="#000" stroke-width="1.8"/>
<path d="M448.8,465.0 C450.6,460.0 454.9,452.8 460.0,447.5 C465.1,442.2 485.9,425.5 492.5,420.0 C499.1,414.5 512.5,404.9 516.7,400.0 C520.9,395.1 524.8,384.5 528.3,378.3 C531.8,372.1 543.4,351.9 546.7,346.7 C550.0,341.4 553.6,335.8 556.7,333.3 C559.8,330.8 563.6,327.1 573.3,325.0 C583.0,322.9 628.9,316.8 640.0,315.0 C651.1,313.2 661.5,311.1 668.8,309.4 C676.0,307.6 695.6,302.6 702.5,300.0 C709.4,297.4 721.7,291.0 727.5,287.5 C733.3,284.0 746.7,274.1 752.5,270.0 C758.3,265.9 771.7,256.4 777.5,252.5 C783.3,248.6 796.7,240.0 802.5,236.2 C808.3,232.5 821.7,223.2 827.5,220.0 C833.3,216.8 846.4,211.3 852.5,208.8 C858.6,206.2 871.9,200.1 880.0,198.0 C888.1,195.9 911.0,191.7 921.7,190.8 C932.4,189.9 962.6,189.6 971.7,190.0 C980.8,190.4 994.8,193.7 1000.0,194.5 C1005.2,195.3 1012.2,197.2 1016.7,196.7 C1021.2,196.2 1030.5,196.2 1038.3,190.0 C1046.1,183.8 1076.1,149.3 1083.3,143.3 C1090.5,137.3 1096.1,138.9 1100.0,138.3 C1103.9,137.7 1108.9,137.4 1116.7,138.3 C1124.5,139.2 1153.1,143.9 1166.7,145.8 C1180.3,147.7 1217.5,153.2 1233.3,154.2 C1249.1,155.2 1288.5,154.6 1302.0,154.1 C1315.5,153.6 1348.8,149.7 1348.8,149.7 C1348.8,149.7 1459.7,358.1 1459.7,358.1 C1459.7,358.1 1272.8,381.3 1245.6,385.5 C1218.4,389.7 1230.2,392.0 1226.9,394.0 C1223.6,396.0 1222.4,395.5 1217.0,403.0 C1211.6,410.5 1186.9,451.0 1180.6,458.7 C1174.3,466.4 1175.2,466.7 1162.7,469.1 C1150.2,471.5 1089.9,476.6 1073.3,479.6 C1056.7,482.6 1030.5,492.2 1020.0,495.0 C1009.5,497.8 989.5,501.6 983.3,503.3 C977.1,505.1 975.5,504.8 966.7,510.0 C958.0,515.2 918.0,542.9 908.3,548.3 C898.6,553.7 901.8,554.0 883.3,556.7 C864.8,559.4 770.0,569.2 750.0,571.7 C730.0,574.2 718.4,576.7 712.0,578.5 C705.6,580.3 698.4,584.4 695.0,587.0 C691.6,589.6 688.4,594.0 683.0,601.0 C677.6,608.0 655.3,639.6 648.3,646.7 C641.3,653.8 630.1,659.7 623.3,661.7 C616.5,663.7 599.7,665.4 590.0,664.2 C580.3,663.0 549.0,655.7 540.0,651.7 C531.0,647.7 518.5,636.6 513.0,630.0 C507.5,623.4 498.0,604.3 493.0,595.0 C488.0,585.7 475.4,560.5 470.0,550.0 C464.6,539.5 450.1,512.0 447.0,505.0 C443.9,498.0 443.5,494.7 443.8,490.0 C444.0,485.3 446.9,470.0 448.8,465.0 Z" fill="none" stroke="#000" stroke-width="1.8"/>
</svg>
<div class="a" style="left:0px;top:77px;width:225px;height:19px;background:#d9d9d9;border:1px solid #bcbcbc"></div>
<div class="t" style="left:5px;top:80px;font-size:11.5px">Model Tree</div>
<svg class="a" style="left:186px;top:82px" width="10" height="10" viewBox="0 0 10 10"><path d="M3.5,0.5h6v6h-6zM0.5,3.5h6v6h-6z" fill="none" stroke="#222" stroke-width="1.1"/><path d="M3.5,1.5h6" stroke="#222" stroke-width="1.5"/><path d="M0.5,4.5h6" stroke="#222" stroke-width="1.5"/><rect x="1" y="5" width="5" height="4" fill="#d9d9d9"/><path d="M0.5,3.5h6v6h-6z" fill="none" stroke="#222" stroke-width="1.1"/></svg>
<svg class="a" style="left:208px;top:82px" width="10" height="10" viewBox="0 0 10 10"><path d="M1,1l8,8M9,1l-8,8" stroke="#222" stroke-width="1.7"/></svg>
<div class="t" style="left:5px;top:106px;font-size:10.7px">Current View</div>
<div class="a" style="left:73px;top:103px;width:147px;height:20px;background:#e1e1e1;border:1px solid #adadad"></div>
<div class="t" style="left:75px;top:106px;">Full Tree</div>
<svg class="a" style="left:207px;top:109px" width="9" height="9" viewBox="0 0 9 9"><path d="M1,2.5l3.5,3.5l3.5,-3.5" fill="none" stroke="#333" stroke-width="1.7"/></svg>
<div class="a" style="left:5px;top:128px;width:215px;height:383px;background:#fff;border:1px solid #828790"></div>
<svg class="a" style="left:0px;top:0px" width="1" height="1" viewBox="0 0 1 1"><defs><linearGradient id="gvol" x1="0" y1="0" x2="1" y2="1"><stop offset="0" stop-color="#c8dcf4"/><stop offset="1" stop-color="#3a6aa8"/></linearGradient><radialGradient id="gorb" cx="0.35" cy="0.3" r="0.8"><stop offset="0" stop-color="#f8d8a0"/><stop offset="0.4" stop-color="#e08a18"/><stop offset="1" stop-color="#8a4a08"/></radialGradient><linearGradient id="gcell" x1="0" y1="0" x2="1" y2="1"><stop offset="0" stop-color="#f0a030"/><stop offset="1" stop-color="#c06808"/></linearGradient></defs></svg>
<div class="t" style="left:10px;top:134px;">Name</div>
<div class="t" style="left:160px;top:134px;">Id</div>
<div class="a" style="left:155px;top:130px;width:1px;height:21px;background:#e5e5e5"></div>
<svg class="a" style="left:202px;top:128px" width="9" height="9" viewBox="0 0 9 9"><path d="M1,6l3.5,-3.5l3.5,3.5" fill="none" stroke="#555" stroke-width="1.7"/></svg>
<svg class="a" style="left:19px;top:154px" width="16" height="16" viewBox="0 0 16 16"><path d="M1.5,5.5l3,-4h10v10l-3,4h-10z" fill="#1a3a6a" stroke="#0a1a3a"/><rect x="1.5" y="5.5" width="10" height="10" fill="url(#gvol)" stroke="#0a1a3a"/><path d="M1.5,5.5l3,-4h10l-3,4z" fill="#2a5a9a" stroke="#0a1a3a"/></svg>
<div class="t" style="left:41px;top:156px;">Volumes</div>
<svg class="a" style="left:19px;top:174px" width="16" height="16" viewBox="0 0 16 16"><g transform="translate(5,0) scale(0.68)"><path d="M1.5,5.5l3,-4h10v10l-3,4h-10z" fill="#1a3a6a" stroke="#0a1a3a"/><rect x="1.5" y="5.5" width="10" height="10" fill="url(#gvol)" stroke="#0a1a3a"/><path d="M1.5,5.5l3,-4h10l-3,4z" fill="#2a5a9a" stroke="#0a1a3a"/></g><g transform="translate(0,5) scale(0.66)"><path d="M1.5,5.5l3,-4h10v10l-3,4h-10z" fill="#1a3a6a" stroke="#0a1a3a"/><rect x="1.5" y="5.5" width="10" height="10" fill="url(#gvol)" stroke="#0a1a3a"/><path d="M1.5,5.5l3,-4h10l-3,4z" fill="#2a5a9a" stroke="#0a1a3a"/></g></svg>
<div class="t" style="left:41px;top:176px;">Sheet Bodies</div>
<svg class="a" style="left:6px;top:178px" width="9" height="9" viewBox="0 0 9 9"><path d="M2.5,1l3.5,3.5l-3.5,3.5" fill="none" stroke="#9a9a9a" stroke-width="1.7"/></svg>
<svg class="a" style="left:19px;top:194px" width="16" height="16" viewBox="0 0 16 16"><g fill="#f0e040" stroke="#c0a820" stroke-width="0.5"><circle cx="8" cy="4" r="2.6" fill="#f4f4f4" stroke="#ccc"/><circle cx="4.5" cy="7.5" r="2.8"/><circle cx="11.5" cy="7.5" r="2.8"/><circle cx="3" cy="11" r="2.8"/><circle cx="13" cy="11" r="2.8"/><circle cx="8" cy="9" r="2.8"/><circle cx="8" cy="13" r="2.8"/></g></svg>
<div class="t" style="left:41px;top:196px;">Groups</div>
<svg class="a" style="left:6px;top:198px" width="9" height="9" viewBox="0 0 9 9"><path d="M2.5,1l3.5,3.5l-3.5,3.5" fill="none" stroke="#9a9a9a" stroke-width="1.7"/></svg>
<svg class="a" style="left:19px;top:214px" width="16" height="16" viewBox="0 0 16 16"><rect x="1" y="1" width="14" height="14" fill="url(#gcell)"/><path d="M1,1h14v14h-14zM8,0.5v15M0.5,8h15" stroke="#555" stroke-width="1.3" fill="none"/><path d="M0,0l2,2M16,0l-2,2M0,16l2,-2M16,16l-2,-2" stroke="#333" stroke-width="0.8"/></svg>
<div class="t" style="left:41px;top:216px;">Boundary Conditions</div>
<svg class="a" style="left:6px;top:218px" width="9" height="9" viewBox="0 0 9 9"><path d="M2.5,1l3.5,3.5l-3.5,3.5" fill="none" stroke="#9a9a9a" stroke-width="1.7"/></svg>
<svg class="a" style="left:19px;top:234px" width="16" height="16" viewBox="0 0 16 16"><circle cx="9" cy="7.5" r="6" fill="url(#gorb)"/><circle cx="3" cy="11" r="2.3" fill="#f8d820" stroke="#a08010" stroke-width="0.5"/><circle cx="13" cy="13.5" r="2.4" fill="#f8d820" stroke="#a08010" stroke-width="0.5"/></svg>
<div class="t" style="left:41px;top:236px;">Materials</div>
<svg class="a" style="left:6px;top:238px" width="9" height="9" viewBox="0 0 9 9"><path d="M2.5,1l3.5,3.5l-3.5,3.5" fill="none" stroke="#9a9a9a" stroke-width="1.7"/></svg>
<svg class="a" style="left:19px;top:254px" width="16" height="16" viewBox="0 0 16 16"><path d="M1.5,5.5l4,-4h9v9l-4,4h-9z" fill="#f0c030" stroke="#2a1a00"/><path d="M10.5,5.5l4,-4v9l-4,4z" fill="#8a6010" stroke="#2a1a00"/><path d="M1.5,5.5l4,-4h9l-4,4z" fill="#d8a020" stroke="#2a1a00"/><path d="M1.5,8.5h9M1.5,11.5h9M4.5,5.5v9M7.5,5.5v9M12,4v9M13.3,2.7v9M4.5,5.5l4,-4M7.5,5.5l4,-4M3,4h9M4.3,2.7h9M10.5,8.5l4,-4M10.5,11.5l4,-4" stroke="#2a1a00" stroke-width="0.7"/></svg>
<div class="t" style="left:41px;top:256px;">Blocks</div>
<svg class="a" style="left:19px;top:274px" width="16" height="16" viewBox="0 0 16 16"><rect x="1" y="1" width="14" height="14" fill="url(#gcell)"/><path d="M1,1h14v14h-14zM8,0.5v15M0.5,8h15" stroke="#555" stroke-width="1.3" fill="none"/><path d="M0,0l2,2M16,0l-2,2M0,16l2,-2M16,16l-2,-2" stroke="#333" stroke-width="0.8"/></svg>
<div class="t" style="left:41px;top:276px;">Side Sets</div>
<svg class="a" style="left:6px;top:278px" width="9" height="9" viewBox="0 0 9 9"><path d="M1,2.5l3.5,3.5l3.5,-3.5" fill="none" stroke="#444" stroke-width="1.7"/></svg>
<svg class="a" style="left:29px;top:294px" width="16" height="16" viewBox="0 0 16 16"><rect x="1" y="1" width="14" height="14" fill="url(#gcell)"/><path d="M1,1h14v14h-14zM8,0.5v15M0.5,8h15" stroke="#555" stroke-width="1.3" fill="none"/><path d="M0,0l2,2M16,0l-2,2M0,16l2,-2M16,16l-2,-2" stroke="#333" stroke-width="0.8"/></svg>
<div class="t" style="left:51px;top:296px;">OuterWeld</div>
<svg class="a" style="left:19px;top:314px" width="16" height="16" viewBox="0 0 16 16"><path d="M2,2h12v12h-12zM6,2v12M10,2v12M2,8h12" stroke="#333" stroke-width="0.9" fill="none"/><path d="M2,8h12" stroke="#e08a20" stroke-width="1.6"/><g fill="#e08a20"><circle cx="2" cy="8" r="1.4"/><circle cx="6" cy="8" r="1.4"/><circle cx="10" cy="8" r="1.4"/><circle cx="14" cy="8" r="1.4"/></g><g fill="#333"><circle cx="2" cy="14" r="1"/><circle cx="6" cy="14" r="1"/><circle cx="10" cy="14" r="1"/><circle cx="14" cy="14" r="1"/></g></svg>
<div class="t" style="left:41px;top:316px;">Node Sets</div>
<svg class="a" style="left:19px;top:334px" width="16" height="16" viewBox="0 0 16 16"><rect x="2" y="11" width="13" height="4" fill="#b8a0d8"/><path d="M2.5,1v14M4.5,1v14M6.5,1v14M2,11h13M2,13h13M9.5,3v12M2,15h13" stroke="#5a3a7a" stroke-width="0.9" fill="none"/><path d="M6,6h9" stroke="#888" stroke-width="0.8"/></svg>
<div class="t" style="left:41px;top:336px;">Boundary Layers</div>
<svg class="a" style="left:19px;top:354px" width="16" height="16" viewBox="0 0 16 16"><path d="M1.5,5.5l4,-3h9v9l-4,3h-9z" fill="#7a5aa8" stroke="#2a1050"/><path d="M10.5,5.5l4,-3v9l-4,3z" fill="#4a2a80" stroke="#2a1050"/><path d="M1.5,5.5l4,-3h9l-4,3z" fill="#a890d0" stroke="#2a1050"/><rect x="2" y="6" width="8" height="8" fill="#c0a8e8"/><circle cx="8" cy="5.5" r="2.6" fill="#f4f4f4"/></svg>
<div class="t" style="left:41px;top:356px;">Sizing Sources</div>
<div class="t" style="left:159px;top:296px;">1</div>
<div class="a" style="left:6px;top:494px;width:213px;height:16px;background:#f0f0f0"></div>
<div class="a" style="left:23px;top:495px;width:152px;height:15px;background:#cdcdcd"></div>
<svg class="a" style="left:10px;top:498px" width="9" height="9" viewBox="0 0 9 9"><path d="M6,1l-3.5,3.5l3.5,3.5" fill="none" stroke="#606060" stroke-width="1.7"/></svg>
<svg class="a" style="left:206px;top:498px" width="9" height="9" viewBox="0 0 9 9"><path d="M2.5,1l3.5,3.5l-3.5,3.5" fill="none" stroke="#606060" stroke-width="1.7"/></svg>
<div class="t" style="left:16px;top:516px;font-size:10.8px">Surface 146</div>
<div class="a" style="left:185px;top:517px;width:21px;height:20px;background:#e1e1e1;border:1px solid #adadad"></div>
<svg class="a" style="left:188px;top:520px" width="15" height="15" viewBox="0 0 15 15"><ellipse cx="6" cy="7" rx="5" ry="6" fill="#6a9a20"/><ellipse cx="6" cy="3" rx="4" ry="2" fill="#a8d040"/><path d="M7,8h3v6h-3zM11,8h3v6h-3z" fill="#111"/><path d="M8,7h5v3h-5z" fill="#111"/></svg>
<div class="a" style="left:0px;top:548px;width:225px;height:19px;background:#d9d9d9;border:1px solid #bcbcbc"></div>
<div class="t" style="left:5px;top:551px;font-size:11.4px">Properties Page</div>
<svg class="a" style="left:186px;top:553px" width="10" height="10" viewBox="0 0 10 10"><path d="M3.5,0.5h6v6h-6zM0.5,3.5h6v6h-6z" fill="none" stroke="#222" stroke-width="1.1"/><path d="M3.5,1.5h6" stroke="#222" stroke-width="1.5"/><path d="M0.5,4.5h6" stroke="#222" stroke-width="1.5"/><rect x="1" y="5" width="5" height="4" fill="#d9d9d9"/><path d="M0.5,3.5h6v6h-6z" fill="none" stroke="#222" stroke-width="1.1"/></svg>
<svg class="a" style="left:208px;top:553px" width="10" height="10" viewBox="0 0 10 10"><path d="M1,1l8,8M9,1l-8,8" stroke="#222" stroke-width="1.7"/></svg>
<div class="a" style="left:5px;top:580px;width:215px;height:46px;border:1px solid #dcdcdc"></div>
<div class="a" style="left:11px;top:574px;width:68px;height:12px;background:#f0f0f0"></div>
<div class="t" style="left:13px;top:575px;font-size:10.8px">Perform Action</div>
<div class="a" style="left:12px;top:594px;width:26px;height:26px;background:#e1e1e1;border:1px solid #c8c8c8"></div>
<svg class="a" style="left:15px;top:597px" width="20" height="20" viewBox="0 0 20 20"><rect x="2" y="2" width="16" height="16" fill="#d8a8e8"/><path d="M2,7.5h16M2,13h16M7.5,2v16M13,2v16" stroke="#b080c8" stroke-width="1"/><rect x="3" y="9" width="9" height="7" fill="#111"/><circle cx="5" cy="14" r="2" fill="#fff"/><circle cx="10" cy="14" r="2" fill="#fff"/></svg>
<div class="a" style="left:41px;top:594px;width:26px;height:26px;background:#e1e1e1;border:1px solid #c8c8c8"></div>
<svg class="a" style="left:44px;top:597px" width="20" height="20" viewBox="0 0 20 20"><path d="M2,2h5v16h-5zM7,8h5v10h-5zM12,13h6v5h-6z" fill="#8a2aa8" stroke="#111" stroke-width="0.8"/><path d="M12,3h1M16,3h1M16,7h1" stroke="#111"/></svg>
<div class="a" style="left:70px;top:594px;width:26px;height:26px;background:#e1e1e1;border:1px solid #c8c8c8"></div>
<svg class="a" style="left:73px;top:597px" width="20" height="20" viewBox="0 0 20 20"><path d="M2,15c2,-6 7,-10 12,-10c3,0 5,2 4,5c-1,3 -8,5 -16,5z" fill="#b040d0" stroke="#5a1a7a" stroke-width="0.7"/><path d="M1,17c5,0 12,-2 17,-5" stroke="#8a9a8a" stroke-width="1.5" fill="none"/></svg>
<div class="a" style="left:99px;top:594px;width:26px;height:26px;background:#e1e1e1;border:1px solid #c8c8c8"></div>
<svg class="a" style="left:102px;top:597px" width="20" height="20" viewBox="0 0 20 20"><circle cx="10" cy="7" r="5" fill="#a860d0" stroke="#6a2a90" stroke-width="0.8"/><path d="M7,11l-2,8l3,-2l2,2zM13,11l2,8l-3,-2l-2,2z" fill="#a860d0"/></svg>
<div class="a" style="left:128px;top:594px;width:26px;height:26px;background:#e1e1e1;border:1px solid #c8c8c8"></div>
<svg class="a" style="left:131px;top:597px" width="20" height="20" viewBox="0 0 20 20"><rect x="2" y="2" width="16" height="16" fill="#a848c8"/><path d="M2,7.5h16M2,13h16M7.5,2v16M13,2v16" stroke="#5a1a7a" stroke-width="1"/><path d="M8,2l9,8M17,2l-9,8" stroke="#d01010" stroke-width="2.2"/></svg>
<div class="a" style="left:157px;top:594px;width:26px;height:26px;background:#e1e1e1;border:1px solid #c8c8c8"></div>
<svg class="a" style="left:160px;top:597px" width="20" height="20" viewBox="0 0 20 20"><path d="M3,9c0,-4 4,-6 10,-5v-2l5,4l-5,4v-2c-4,-1 -7,0 -10,1z" fill="#b050d8" stroke="#4a1a6a" stroke-width="0.7"/><path d="M17,11c0,4 -4,6 -10,5v2l-5,-4l5,-4v2c4,1 7,0 10,-1z" fill="#b050d8" stroke="#4a1a6a" stroke-width="0.7"/></svg>
<div class="a" style="left:186px;top:594px;width:26px;height:26px;background:#e1e1e1;border:1px solid #c8c8c8"></div>
<svg class="a" style="left:189px;top:597px" width="20" height="20" viewBox="0 0 20 20"><path d="M3,5l2,-2l5,5l5,-5l2,2l-5,5l5,5l-2,2l-5,-5l-5,5l-2,-2l5,-5z" fill="#8a3ab0" stroke="#3a1050" stroke-width="0.8"/></svg>
<div class="a" style="left:5px;top:632px;width:215px;height:375px;background:#fff;border:1px solid #828790"></div>
<div class="t" style="left:10px;top:638px;">Property</div>
<div class="t" style="left:150px;top:638px;">Value</div>
<div class="a" style="left:145px;top:634px;width:1px;height:21px;background:#e5e5e5"></div>
<div class="a" style="left:6px;top:633px;width:197px;height:373px;overflow:hidden"><div class="a" style="left:-6px;top:-633px;width:220px;height:1040px"><svg class="a" style="left:6px;top:660px" width="9" height="9" viewBox="0 0 9 9"><path d="M1,2.5l3.5,3.5l3.5,-3.5" fill="none" stroke="#333" stroke-width="1.7"/></svg><div class="t" style="left:19px;top:658px;">General</div><div class="a" style="left:26px;top:673px;width:176px;height:17px;background:#f5f5f5"></div><div class="t" style="left:29px;top:675px;">Id</div><div class="t" style="left:149px;top:675px;">146</div><div class="t" style="left:29px;top:692px;">Type</div><div class="t" style="left:149px;top:692px;">Surface</div><div class="a" style="left:26px;top:707px;width:176px;height:17px;background:#f5f5f5"></div><div class="t" style="left:29px;top:709px;">Name</div><div class="t" style="left:149px;top:709px;">Surface 14</div><div class="t" style="left:29px;top:726px;">Idless Signature</div><div class="t" style="left:149px;top:726px;">calc</div><div class="a" style="left:26px;top:741px;width:176px;height:17px;background:#f5f5f5"></div><div class="t" style="left:29px;top:743px;">Color</div><div class="t" style="left:149px;top:743px;">default</div><div class="t" style="left:29px;top:760px;">Location</div><div class="t" style="left:149px;top:760px;">9.000000, -</div><div class="a" style="left:16px;top:775px;width:186px;height:17px;background:#f5f5f5"></div><svg class="a" style="left:6px;top:779px" width="9" height="9" viewBox="0 0 9 9"><path d="M1,2.5l3.5,3.5l3.5,-3.5" fill="none" stroke="#333" stroke-width="1.7"/></svg><div class="t" style="left:19px;top:777px;">Geometry</div><div class="t" style="left:29px;top:794px;">Is Merged</div><div class="t" style="left:149px;top:794px;">No</div><div class="a" style="left:26px;top:809px;width:176px;height:17px;background:#f5f5f5"></div><div class="t" style="left:29px;top:811px;">Is Virtual</div><div class="t" style="left:149px;top:811px;">Yes</div><div class="t" style="left:29px;top:828px;">Engine</div><div class="t" style="left:149px;top:828px;">virtual</div><div class="a" style="left:26px;top:843px;width:176px;height:17px;background:#f5f5f5"></div><div class="t" style="left:29px;top:845px;">Surface Area</div><div class="t" style="left:149px;top:845px;">calc</div><div class="t" style="left:29px;top:862px;">Analytic Type</div><div class="t" style="left:149px;top:862px;">undefined</div><div class="a" style="left:16px;top:877px;width:186px;height:17px;background:#f5f5f5"></div><svg class="a" style="left:6px;top:881px" width="9" height="9" viewBox="0 0 9 9"><path d="M1,2.5l3.5,3.5l3.5,-3.5" fill="none" stroke="#333" stroke-width="1.7"/></svg><div class="t" style="left:19px;top:879px;">Meshing</div><div class="t" style="left:29px;top:896px;">Is Meshed</div><div class="t" style="left:149px;top:896px;">No</div><div class="a" style="left:26px;top:911px;width:176px;height:17px;background:#f5f5f5"></div><div class="t" style="left:29px;top:913px;">Number of Elements</div><div class="t" style="left:149px;top:913px;">0</div><div class="t" style="left:29px;top:930px;">Number of Nodes</div><div class="t" style="left:149px;top:930px;">0</div><div class="a" style="left:26px;top:945px;width:176px;height:17px;background:#f5f5f5"></div><div class="t" style="left:29px;top:947px;">Requested Intervals</div><div class="t" style="left:149px;top:947px;">Not Set</div><div class="t" style="left:29px;top:964px;">Requested Size</div><div class="t" style="left:149px;top:964px;">calc</div><div class="a" style="left:26px;top:979px;width:176px;height:17px;background:#f5f5f5"></div><div class="t" style="left:29px;top:981px;">Meshed Area</div><div class="t" style="left:149px;top:981px;">calc</div><div class="t" style="left:29px;top:998px;">Mesh Scheme</div><div class="t" style="left:149px;top:998px;">Default</div></div></div>
<div class="a" style="left:145px;top:656px;width:58px;height:350px;overflow:hidden;pointer-events:none"></div>
<div class="a" style="left:203px;top:633px;width:16px;height:373px;background:#f0f0f0"></div>
<div class="a" style="left:204px;top:650px;width:14px;height:294px;background:#cdcdcd"></div>
<svg class="a" style="left:207px;top:637px" width="9" height="9" viewBox="0 0 9 9"><path d="M1,6l3.5,-3.5l3.5,3.5" fill="none" stroke="#606060" stroke-width="1.7"/></svg>
<svg class="a" style="left:207px;top:993px" width="9" height="9" viewBox="0 0 9 9"><path d="M1,2.5l3.5,3.5l3.5,-3.5" fill="none" stroke="#606060" stroke-width="1.7"/></svg>
<div class="a" style="left:1650px;top:77px;width:258px;height:19px;background:#d9d9d9;border:1px solid #bcbcbc"></div>
<div class="t" style="left:1655px;top:80px;font-size:11.8px">Command Panel</div>
<svg class="a" style="left:1869px;top:82px" width="10" height="10" viewBox="0 0 10 10"><path d="M3.5,0.5h6v6h-6zM0.5,3.5h6v6h-6z" fill="none" stroke="#222" stroke-width="1.1"/><path d="M3.5,1.5h6" stroke="#222" stroke-width="1.5"/><path d="M0.5,4.5h6" stroke="#222" stroke-width="1.5"/><rect x="1" y="5" width="5" height="4" fill="#d9d9d9"/><path d="M0.5,3.5h6v6h-6z" fill="none" stroke="#222" stroke-width="1.1"/></svg>
<svg class="a" style="left:1891px;top:82px" width="10" height="10" viewBox="0 0 10 10"><path d="M1,1l8,8M9,1l-8,8" stroke="#222" stroke-width="1.7"/></svg>
<div style="font-size:10.8px">
<div class="a" style="left:1661px;top:109px;width:248px;height:58px;border:1px solid #dcdcdc"></div>
<div class="a" style="left:1667px;top:102px;width:184px;height:13px;background:#f0f0f0"></div>
<div class="t" style="left:1669px;top:102px;">Mode - Analysis Groups and Materials</div>
<div class="a" style="left:1661px;top:174px;width:248px;height:58px;border:1px solid #dcdcdc"></div>
<div class="a" style="left:1667px;top:167px;width:76px;height:13px;background:#f0f0f0"></div>
<div class="t" style="left:1669px;top:167px;">Entity - Sideset</div>
<div class="a" style="left:1661px;top:239px;width:248px;height:97px;border:1px solid #dcdcdc"></div>
<div class="a" style="left:1667px;top:232px;width:112px;height:13px;background:#f0f0f0"></div>
<div class="t" style="left:1669px;top:232px;">Action - Create sideset</div>
<div class="a" style="left:1668.0px;top:123px;width:38px;height:38px;background:#e1e1e1;border:1px solid #c4c4c4"></div>
<svg class="a" style="left:1672.0px;top:127px" width="30" height="30" viewBox="0 0 26 26"><rect x="10" y="3" width="11" height="14" fill="#1f4f8a" stroke="#0a2040" stroke-width="0.8"/><ellipse cx="15.5" cy="3.5" rx="5.5" ry="2" fill="#3a6aa8" stroke="#0a2040" stroke-width="0.8"/><path d="M14,25l6.5,-13l6,13z" fill="#1f4f8a" stroke="#0a2040" stroke-width="0.8"/><circle cx="8.5" cy="19" r="6.5" fill="#1f4f8a" stroke="#0a2040" stroke-width="0.8"/><circle cx="6.5" cy="16.5" r="2" fill="#5a8ac8" opacity="0.6"/></svg>
<div class="a" style="left:1707.4px;top:123px;width:38px;height:38px;background:#e1e1e1;border:1px solid #c4c4c4"></div>
<svg class="a" style="left:1711.4px;top:127px" width="30" height="30" viewBox="1 1 20 20"><path d="M2.5,7.5l5,-5h12v12l-5,5h-12z" fill="#b090e0" stroke="#2a1a3a" stroke-width="1.2"/><path d="M2.5,7.5l5,-5h12l-5,5z" fill="#a070c8" stroke="#2a1a3a" stroke-width="1.2"/><path d="M14.5,7.5l5,-5v12l-5,5z" fill="#5a3a80" stroke="#2a1a3a" stroke-width="1.2"/><path d="M2.5,11.5h12M2.5,15.5h12M6.5,7.5v12M10.5,7.5v12M6.5,7.5l5,-5M10.5,7.5l5,-5M4.2,5.8h12M5.8,4.2h12M16.2,5.8v12M17.8,4.2v12M14.5,11.5l5,-5M14.5,15.5l5,-5" stroke="#2a1a3a" stroke-width="1.1" fill="none"/></svg>
<div class="a" style="left:1746.8px;top:123px;width:38px;height:38px;background:#cce4f7;border:1px solid #005499"></div>
<svg class="a" style="left:1750.8px;top:127px" width="30" height="30" viewBox="1 1 20 20"><path d="M2.5,7.5l5,-5h12v12l-5,5h-12z" fill="#f0b830" stroke="#1a1000" stroke-width="1.2"/><path d="M2.5,7.5l5,-5h12l-5,5z" fill="#e8a820" stroke="#1a1000" stroke-width="1.2"/><path d="M14.5,7.5l5,-5v12l-5,5z" fill="#9a6a10" stroke="#1a1000" stroke-width="1.2"/><path d="M2.5,11.5h12M2.5,15.5h12M6.5,7.5v12M10.5,7.5v12M6.5,7.5l5,-5M10.5,7.5l5,-5M4.2,5.8h12M5.8,4.2h12M16.2,5.8v12M17.8,4.2v12M14.5,11.5l5,-5M14.5,15.5l5,-5" stroke="#1a1000" stroke-width="1.1" fill="none"/></svg>
<div class="a" style="left:1786.2px;top:123px;width:38px;height:38px;background:#e1e1e1;border:1px solid #c4c4c4"></div>
<svg class="a" style="left:1790.2px;top:127px" width="30" height="30" viewBox="0 0 26 26"><path d="M2,8l9,2l9,-2v4l-9,3l-9,-3z" fill="#f0b070" stroke="#9a6020" stroke-width="0.6"/><path d="M11,6l9,-1v3l-9,2z" fill="#e8d0b8"/></svg>
<div class="a" style="left:1825.6px;top:123px;width:38px;height:38px;background:#e1e1e1;border:1px solid #c4c4c4"></div>
<svg class="a" style="left:1829.6px;top:127px" width="30" height="30" viewBox="0 0 26 26"><rect x="2" y="3" width="18" height="16" fill="#f0a050" stroke="#8a4a10" stroke-width="0.8"/><path d="M2,8.5h18M2,14h18M8,3v5.5M14,3v5.5M5,8.5v5.5M11,8.5v5.5M17,8.5v5.5M8,14v5M14,14v5" stroke="#8a4a10" stroke-width="0.8"/></svg>
<div class="a" style="left:1865.0px;top:123px;width:38px;height:38px;background:#cce4f7;border:1px solid #005499"></div>
<svg class="a" style="left:1869.0px;top:127px" width="30" height="30" viewBox="0 0 26 26"><defs><radialGradient id="rb" cx="0.1" cy="0.9" r="1.2"><stop offset="0" stop-color="#f02010"/><stop offset="0.3" stop-color="#f0e020"/><stop offset="0.55" stop-color="#20d040"/><stop offset="0.8" stop-color="#10c0e0"/><stop offset="1" stop-color="#1030d0"/></radialGradient></defs><rect x="3" y="3" width="20" height="20" fill="#000"/><rect x="1" y="1" width="20" height="20" fill="url(#rb)" stroke="#000" stroke-width="1"/></svg>
<div class="a" style="left:1668.0px;top:188px;width:38px;height:38px;background:#e1e1e1;border:1px solid #c4c4c4"></div>
<svg class="a" style="left:1672.0px;top:192px" width="30" height="30" viewBox="0 0 26 26"><path d="M3,3h20v20h-20zM13,3v20M3,13h20" stroke="#2a2a2a" stroke-width="1.3" fill="none"/><path d="M3,13h20" stroke="#d08020" stroke-width="2.5"/><g fill="#d08020" stroke="#5a3a10" stroke-width="0.5"><circle cx="3" cy="3" r="1.6"/><circle cx="13" cy="3" r="1.6"/><circle cx="23" cy="3" r="1.6"/><circle cx="3" cy="23" r="1.6"/><circle cx="13" cy="23" r="1.6"/><circle cx="23" cy="23" r="1.6"/><circle cx="3" cy="13" r="2.6"/><circle cx="13" cy="13" r="2.6"/><circle cx="23" cy="13" r="2.6"/></g></svg>
<div class="a" style="left:1707.4px;top:188px;width:38px;height:38px;background:#cce4f7;border:1px solid #005499"></div>
<svg class="a" style="left:1711.4px;top:192px" width="30" height="30" viewBox="0 0 26 26"><rect x="3" y="3" width="20" height="20" fill="#d08010"/><path d="M3,3h20v20h-20zM13,3v20M3,13h20" stroke="#444" stroke-width="1.6" fill="none"/><g fill="#222"><circle cx="3" cy="3" r="1.5"/><circle cx="13" cy="3" r="1.5"/><circle cx="23" cy="3" r="1.5"/><circle cx="3" cy="23" r="1.5"/><circle cx="13" cy="23" r="1.5"/><circle cx="23" cy="23" r="1.5"/><circle cx="3" cy="13" r="1.5"/><circle cx="23" cy="13" r="1.5"/></g></svg>
<div class="a" style="left:1746.8px;top:188px;width:38px;height:38px;background:#e1e1e1;border:1px solid #c4c4c4"></div>
<svg class="a" style="left:1750.8px;top:192px" width="30" height="30" viewBox="1 1 20 20"><path d="M2.5,7.5l5,-5h12v12l-5,5h-12z" fill="#f0b830" stroke="#1a1000" stroke-width="1.2"/><path d="M2.5,7.5l5,-5h12l-5,5z" fill="#e8a820" stroke="#1a1000" stroke-width="1.2"/><path d="M14.5,7.5l5,-5v12l-5,5z" fill="#9a6a10" stroke="#1a1000" stroke-width="1.2"/><path d="M2.5,11.5h12M2.5,15.5h12M6.5,7.5v12M10.5,7.5v12M6.5,7.5l5,-5M10.5,7.5l5,-5M4.2,5.8h12M5.8,4.2h12M16.2,5.8v12M17.8,4.2v12M14.5,11.5l5,-5M14.5,15.5l5,-5" stroke="#1a1000" stroke-width="1.1" fill="none"/></svg>
<div class="a" style="left:1786.2px;top:188px;width:38px;height:38px;background:#e1e1e1;border:1px solid #c4c4c4"></div>
<svg class="a" style="left:1790.2px;top:192px" width="30" height="30" viewBox="0 0 26 26"><circle cx="15" cy="11" r="9" fill="#d88a18" stroke="#6a4010" stroke-width="0.7"/><circle cx="5" cy="16" r="3.5" fill="#f8d020" stroke="#8a6010" stroke-width="0.6"/><circle cx="19" cy="21" r="4" fill="#f8d020" stroke="#8a6010" stroke-width="0.6"/></svg>
<div class="a" style="left:1668.0px;top:253px;width:38px;height:38px;background:#cce4f7;border:1px solid #005499"></div>
<svg class="a" style="left:1672.0px;top:257px" width="30" height="30" viewBox="0 0 26 26"><rect x="7" y="8" width="16" height="16" fill="#d08010" stroke="#222" stroke-width="1"/><path d="M5,2v8M1,6h8M2,3l6,6M8,3l-6,6" stroke="#888" stroke-width="0.9"/></svg>
<div class="a" style="left:1707.4px;top:253px;width:38px;height:38px;background:#e1e1e1;border:1px solid #c4c4c4"></div>
<svg class="a" style="left:1711.4px;top:257px" width="30" height="30" viewBox="0 0 26 26"><rect x="5" y="3" width="18" height="18" fill="#d08010" stroke="#222" stroke-width="1"/><path d="M2,25l12,-13l1.5,1.5l-12,13z" fill="#111"/><path d="M10,7l5,-3l5,2l-2,1l3,4l-2,1l-3,-3l-3,2z" fill="#888" stroke="#333" stroke-width="0.6"/></svg>
<div class="a" style="left:1746.8px;top:253px;width:38px;height:38px;background:#e1e1e1;border:1px solid #c4c4c4"></div>
<svg class="a" style="left:1750.8px;top:257px" width="30" height="30" viewBox="0 0 26 26"><path d="M5,11l14,-2l-2,13c-3,2 -8,2 -10,0z" fill="#d08a20" stroke="#222" stroke-width="0.8"/><ellipse cx="8" cy="7" rx="6" ry="3" fill="none" stroke="#222" stroke-width="0.8"/><path d="M17,9c4,1 6,5 6,13c-1,1 -3,0 -3,-2c0,-5 -1,-8 -3,-10z" fill="#1a6a10"/></svg>
<div class="a" style="left:1786.2px;top:253px;width:38px;height:38px;background:#e1e1e1;border:1px solid #c4c4c4"></div>
<svg class="a" style="left:1790.2px;top:257px" width="30" height="30" viewBox="0 0 26 26"><rect x="3" y="3" width="20" height="20" fill="#f0b850" stroke="#6a5030" stroke-width="0.8"/><text x="5" y="12" font-family="Liberation Sans" font-size="9" fill="#222">1&#8594;</text><text x="4.5" y="21" font-family="Liberation Sans" font-size="8.5" fill="#222">100</text></svg>
<div class="a" style="left:1825.6px;top:253px;width:38px;height:38px;background:#e1e1e1;border:1px solid #c4c4c4"></div>
<svg class="a" style="left:1829.6px;top:257px" width="30" height="30" viewBox="1 1 20 20"><path d="M2.5,7.5l5,-5h12v12l-5,5h-12z" fill="#1a6a10" stroke="#111" stroke-width="1.2"/><path d="M2.5,7.5l5,-5h12l-5,5z" fill="#e8a820" stroke="#111" stroke-width="1.2"/><path d="M14.5,7.5l5,-5v12l-5,5z" fill="#d09020" stroke="#111" stroke-width="1.2"/><path d="M2.5,11.5h12M2.5,15.5h12M6.5,7.5v12M10.5,7.5v12M6.5,7.5l5,-5M10.5,7.5l5,-5M4.2,5.8h12M5.8,4.2h12M16.2,5.8v12M17.8,4.2v12M14.5,11.5l5,-5M14.5,15.5l5,-5" stroke="#111" stroke-width="1.1" fill="none"/></svg>
<div class="a" style="left:1865.0px;top:253px;width:38px;height:38px;background:#e1e1e1;border:1px solid #c4c4c4"></div>
<svg class="a" style="left:1869.0px;top:257px" width="30" height="30" viewBox="1 1 20 20"><path d="M2.5,7.5l5,-5h12v12l-5,5h-12z" fill="#1a6a10" stroke="#111" stroke-width="1.2"/><path d="M2.5,7.5l5,-5h12l-5,5z" fill="#e8a820" stroke="#111" stroke-width="1.2"/><path d="M14.5,7.5l5,-5v12l-5,5z" fill="#d09020" stroke="#111" stroke-width="1.2"/><path d="M2.5,11.5h12M2.5,15.5h12M6.5,7.5v12M10.5,7.5v12M6.5,7.5l5,-5M10.5,7.5l5,-5M4.2,5.8h12M5.8,4.2h12M16.2,5.8v12M17.8,4.2v12M14.5,11.5l5,-5M14.5,15.5l5,-5" stroke="#111" stroke-width="1.1" fill="none"/></svg>
<div class="a" style="left:1668.0px;top:293px;width:38px;height:38px;background:#e1e1e1;border:1px solid #c4c4c4"></div>
<svg class="a" style="left:1672.0px;top:297px" width="30" height="30" viewBox="0 0 26 26"><circle cx="10" cy="11" r="4" fill="#f0b030" stroke="#8a6010" stroke-width="0.6"/><path d="M8,14l-3,9l3,-2l2,2zM12,14l3,9l-3,-2l-2,2z" fill="#f0b030"/><rect x="17" y="4" width="3" height="4" fill="#2020d0"/><rect x="17" y="8" width="3" height="4" fill="#20d0e0"/><rect x="17" y="12" width="3" height="3" fill="#20d020"/><rect x="17" y="15" width="3" height="4" fill="#e020e0"/><rect x="17" y="19" width="3" height="4" fill="#e02020"/></svg>
<div class="a" style="left:1707.4px;top:293px;width:38px;height:38px;background:#e1e1e1;border:1px solid #c4c4c4"></div>
<svg class="a" style="left:1711.4px;top:297px" width="30" height="30" viewBox="0 0 26 26"><path d="M4,9l3,-3l6,6l6,-6l3,3l-6,6l6,6l-3,3l-6,-6l-6,6l-3,-3l6,-6z" fill="#e8a030" stroke="#7a4a10" stroke-width="0.8"/></svg>
<div class="t" style="left:1659px;top:365px;">Sideset ID</div>
<div class="a" style="left:1730px;top:361px;width:200px;height:20px;background:#fde3c1;border:1px solid #0078d7"></div>
<div class="t" style="left:1734px;top:365px;">1</div>
<div class="a" style="left:1741px;top:364px;width:1px;height:14px;background:#000"></div>
<div class="t" style="left:1659px;top:390px;">Sideset Name</div>
<div class="a" style="left:1730px;top:386px;width:200px;height:20px;background:#ffcb86;border:1px solid #7a7a7a;box-shadow:inset 0 0 0 1px #f6f6f6"></div>
<div class="t" style="left:1733px;top:390px;">OuterWeld</div>
<div class="a" style="left:1660px;top:417px;width:265px;height:109px;border:1px solid #dcdcdc"></div>
<div class="a" style="left:1666px;top:411px;width:38px;height:13px;background:#f0f0f0"></div>
<div class="t" style="left:1668px;top:411px;">Select</div>
<div class="rad" style="left:1666px;top:434px"></div><div class="a" style="left:1669px;top:437px;width:7px;height:7px;border-radius:50%;background:#222"></div>
<div class="t" style="left:1684px;top:435px;">Surface</div>
<div class="rad" style="left:1666px;top:459px"></div>
<div class="t" style="left:1684px;top:460px;">Curve</div>
<div class="rad" style="left:1666px;top:481px"></div>
<div class="t" style="left:1684px;top:482px;">Group</div>
<div class="rad" style="left:1793px;top:432px"></div>
<div class="t" style="left:1811px;top:433px;">Face</div>
<div class="rad" style="left:1793px;top:456px"></div>
<div class="t" style="left:1811px;top:457px;">Edge</div>
<div class="rad" style="left:1793px;top:481px"></div>
<div class="t" style="left:1811px;top:482px;">Tri</div>
<div class="t" style="left:1665px;top:505px;">ID(s)</div>
<div class="a" style="left:1695px;top:501px;width:219px;height:20px;background:#ffcb86;border:1px solid #7a7a7a;box-shadow:inset 0 0 0 1px #f6f6f6"></div>
<div class="t" style="left:1698px;top:505px;">146</div>
<div class="a" style="left:1660px;top:538px;width:265px;height:104px;border:1px solid #dcdcdc"></div>
<div class="a" style="left:1664px;top:531px;width:103px;height:14px;background:#f0f0f0"></div>
<div class="chk" style="left:1668px;top:532px"></div>
<div class="t" style="left:1684px;top:532px;">With Respect To</div>
<div class="radd" style="left:1666px;top:553px"></div><div class="a" style="left:1669px;top:556px;width:7px;height:7px;border-radius:50%;background:#b4b4b4"></div>
<div class="t" style="left:1684px;top:553px;color:#6d6d6d">wrt Surface</div>
<div class="radd" style="left:1666px;top:575px"></div>
<div class="t" style="left:1684px;top:575px;color:#6d6d6d">wrt Volume</div>
<div class="radd" style="left:1666px;top:597px"></div>
<div class="t" style="left:1684px;top:597px;color:#6d6d6d">wrt Face</div>
<div class="radd" style="left:1835px;top:553px"></div>
<div class="t" style="left:1853px;top:553px;color:#6d6d6d">wrt Hex</div>
<div class="radd" style="left:1835px;top:575px"></div>
<div class="t" style="left:1853px;top:575px;color:#6d6d6d">wrt Tet</div>
<div class="radd" style="left:1835px;top:597px"></div>
<div class="t" style="left:1853px;top:597px;color:#6d6d6d">wrt Tri</div>
<div class="t" style="left:1665px;top:622px;color:#6d6d6d">Surface ID(s)</div>
<div class="a" style="left:1750px;top:617px;width:164px;height:20px;background:#f0f0f0;border:1px solid #cccccc"></div>
<div class="t" style="left:1753px;top:621px;color:#6d6d6d">all</div>
<div class="a" style="left:1660px;top:654px;width:265px;height:79px;border:1px solid #dcdcdc"></div>
<div class="a" style="left:1664px;top:647px;width:80px;height:14px;background:#f0f0f0"></div>
<div class="chk" style="left:1668px;top:648px"></div>
<div class="t" style="left:1684px;top:648px;">Direction</div>
<div class="radd" style="left:1666px;top:669px"></div><div class="a" style="left:1669px;top:672px;width:7px;height:7px;border-radius:50%;background:#b4b4b4"></div>
<div class="t" style="left:1684px;top:669px;color:#6d6d6d">Forward</div>
<div class="radd" style="left:1666px;top:691px"></div>
<div class="t" style="left:1684px;top:691px;color:#6d6d6d">Reverse</div>
<div class="radd" style="left:1666px;top:713px"></div>
<div class="t" style="left:1684px;top:713px;color:#6d6d6d">Forward/Reverse</div>
<div class="chk" style="left:1666px;top:750px"></div>
<div class="t" style="left:1684px;top:750px;">Reset All Sidesets</div>
<div class="a" style="left:1840px;top:745px;width:73px;height:23px;background:#cccccc;border:1px solid #bfbfbf"></div>
<div class="t" style="left:1860px;top:749px;color:#838383">Reset</div>
<div class="a" style="left:1661px;top:780px;width:28px;height:28px;background:#e1e1e1;border:1px solid #adadad"></div>
<svg class="a" style="left:1664px;top:783px" width="22" height="22" viewBox="0 0 22 22"><circle cx="11" cy="11" r="9.5" fill="none" stroke="#111" stroke-width="1.3"/><circle cx="11" cy="6.5" r="1.3" fill="#111"/><path d="M9,9.5h3v6.5M8.5,16h5" stroke="#111" stroke-width="1.3" fill="none"/></svg>
<svg class="a" style="left:1700px;top:783px" width="22" height="22" viewBox="0 0 22 22"><path d="M4,9a7,7 0 1 1 3,9" fill="none" stroke="#1a4aa0" stroke-width="2.6"/><path d="M1,7l6,-1l-2,6z" fill="#1a4aa0"/></svg>
<div class="a" style="left:1846px;top:783px;width:80px;height:21px;background:#e5f1fb;border:1px solid #0078d7"></div>
<div class="t" style="left:1868px;top:787px;">Apply</div>
<div class="a" style="left:1915px;top:356px;width:5px;height:460px;background:#f0f0f0"></div>
<div class="a" style="left:1655px;top:969px;width:259px;height:1px;background:#fff"></div>
<div class="a" style="left:1672px;top:970px;width:215px;height:15px;background:#cdcdcd"></div>
<svg class="a" style="left:1659px;top:973px" width="9" height="9" viewBox="0 0 9 9"><path d="M6,1l-3.5,3.5l3.5,3.5" fill="none" stroke="#555" stroke-width="1.7"/></svg>
<svg class="a" style="left:1901px;top:973px" width="9" height="9" viewBox="0 0 9 9"><path d="M2.5,1l3.5,3.5l-3.5,3.5" fill="none" stroke="#555" stroke-width="1.7"/></svg>
<div class="a" style="left:1650px;top:990px;width:270px;height:1px;background:#a8a8a8"></div>
<div class="a" style="left:1650px;top:991px;width:101px;height:21px;background:#fff;border:1px solid #d9d9d9;border-top:none"></div>
<div class="t" style="left:1661px;top:996px;font-size:10.4px">Command Panel</div>
<div class="a" style="left:1751px;top:991px;width:80px;height:20px;border-right:1px solid #d9d9d9;border-bottom:1px solid #d9d9d9"></div>
<div class="t" style="left:1761px;top:995px;font-size:10.4px">Power Tools</div>
<div class="a" style="left:1831px;top:991px;width:46px;height:20px;border-bottom:1px solid #d9d9d9"></div>
<div class="t" style="left:1843px;top:995px;font-size:10.4px">ITEM</div>
</div>
<div class="a" style="left:229px;top:755px;width:1417px;height:19px;background:#d9d9d9;border:1px solid #bcbcbc"></div>
<div class="t" style="left:234px;top:758px;font-size:11.8px">Command Line</div>
<svg class="a" style="left:1607px;top:760px" width="10" height="10" viewBox="0 0 10 10"><path d="M3.5,0.5h6v6h-6zM0.5,3.5h6v6h-6z" fill="none" stroke="#222" stroke-width="1.1"/><path d="M3.5,1.5h6" stroke="#222" stroke-width="1.5"/><path d="M0.5,4.5h6" stroke="#222" stroke-width="1.5"/><rect x="1" y="5" width="5" height="4" fill="#d9d9d9"/><path d="M0.5,3.5h6v6h-6z" fill="none" stroke="#222" stroke-width="1.1"/></svg>
<svg class="a" style="left:1629px;top:760px" width="10" height="10" viewBox="0 0 10 10"><path d="M1,1l8,8M9,1l-8,8" stroke="#222" stroke-width="1.7"/></svg>
<div class="a" style="left:231px;top:778px;width:1411px;height:218px;background:#fff;border:1px solid #e3e3e3"></div>
<div class="a" style="left:233px;top:780px;width:1407px;height:213px;background:#fff;border:1px solid #646464"></div>
<div class="mono" style="left:238px;top:782px">Finished Command: sideset 1 add surface 146

Cubit&gt;sideset 1 name "OuterWeld"
Finished Command: sideset 1 name "OuterWeld"

Cubit&gt;undo group end
Finished Command: undo group end

Cubit&gt;</div>
<div class="a" style="left:1623px;top:781px;width:15px;height:211px;background:#f0f0f0"></div>
<div class="a" style="left:1623px;top:868px;width:15px;height:107px;background:#cdcdcd"></div>
<svg class="a" style="left:1626px;top:785px" width="9" height="9" viewBox="0 0 9 9"><path d="M1,6l3.5,-3.5l3.5,3.5" fill="none" stroke="#606060" stroke-width="1.7"/></svg>
<svg class="a" style="left:1626px;top:977px" width="9" height="9" viewBox="0 0 9 9"><path d="M1,2.5l3.5,3.5l3.5,-3.5" fill="none" stroke="#606060" stroke-width="1.7"/></svg>
<svg class="a" style="left:0;top:0" width="1920" height="1040" viewBox="0 0 1920 1040" pointer-events="none"><path d="M231.5,995.5 L236.5,1006.4 Q238.0,1008.4 240.5,1008.4 L278,1008.4 Q280.5,1008.4 282,1006.4 L287,995.5" fill="#f0f0f0" stroke="#333" stroke-width="1"/><path d="M288.4,995.5 L293.4,1007.4 Q294.9,1009.4 297.4,1009.4 L349.8,1009.4 Q352.3,1009.4 353.8,1007.4 L358.8,995.5" fill="#fff" stroke="#333" stroke-width="1"/><path d="M359.5,995.5 L364.5,1006.4 Q366.0,1008.4 368.5,1008.4 L397.2,1008.4 Q399.7,1008.4 401.2,1006.4 L406.2,995.5" fill="#f0f0f0" stroke="#333" stroke-width="1"/><path d="M408.2,995.5 L413.2,1006.4 Q414.7,1008.4 417.2,1008.4 L455.4,1008.4 Q457.9,1008.4 459.4,1006.4 L464.4,995.5" fill="#f0f0f0" stroke="#333" stroke-width="1"/></svg>
<div class="t" style="left:242.3px;top:995px;font-size:11px">Python</div>
<div class="t" style="left:300.6px;top:996px;font-size:11px">Command</div>
<div class="t" style="left:371.7px;top:995px;font-size:11px">Error</div>
<div class="t" style="left:419px;top:995px;font-size:11px">History</div>
</body></html>
